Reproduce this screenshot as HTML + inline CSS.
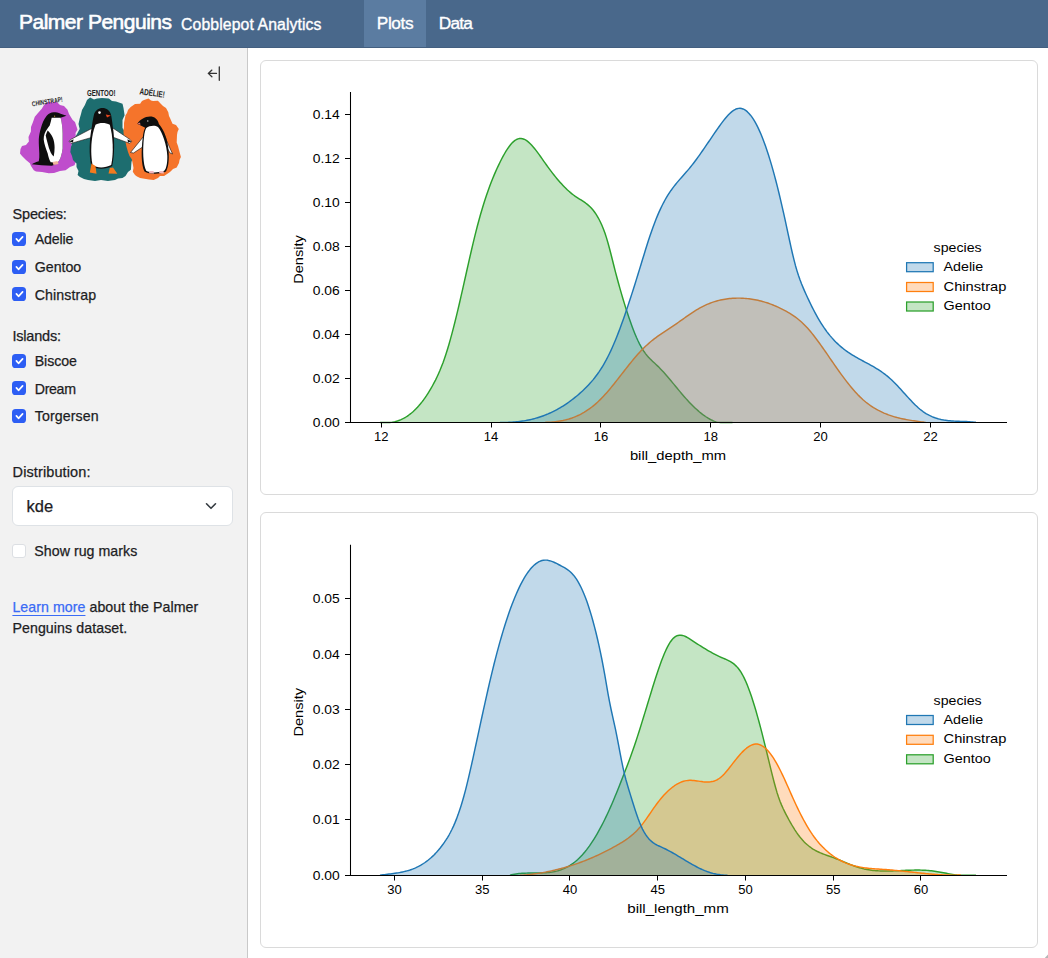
<!DOCTYPE html>
<html><head><meta charset="utf-8"><title>Palmer Penguins</title>
<style>
html,body{margin:0;padding:0;}
body{width:1048px;height:958px;overflow:hidden;position:relative;background:#fff;font-family:"Liberation Sans",sans-serif;}
.t{position:absolute;white-space:nowrap;line-height:1;-webkit-text-stroke:0.25px currentColor;}
.hdr{position:absolute;left:0;top:0;width:1048px;height:48px;background:#49688b;box-shadow:inset 0 -1px 0 rgba(0,0,0,0.08);}
.tab{position:absolute;left:364px;top:0;width:62px;height:47px;background:#5b7ca1;}
.side{position:absolute;left:0;top:48px;width:247px;height:910px;background:#f2f2f2;border-right:1px solid #c9c9c9;}
.cb{position:absolute;width:14px;height:14px;border-radius:3.6px;background:#2d5ef4;}
.cb svg{display:block}
.cbe{position:absolute;width:12px;height:12px;border-radius:3px;background:#fff;border:1px solid #dcdfe3;}
.sel{position:absolute;left:12px;top:486px;width:219px;height:38px;border:1px solid #dee2e6;border-radius:6px;background:#fff;}
.card{position:absolute;left:260px;width:776px;border:1px solid #dadada;border-radius:6px;background:#fff;}
svg text{font-family:"Liberation Sans",sans-serif;fill:#000;}
</style></head><body>
<div class="hdr"></div>
<div class="tab"></div>
<div class="t" style="left:19.00px;top:10.72px;font-size:21px;letter-spacing:-0.494px;color:#fff;font-weight:400;-webkit-text-stroke:0.6px #fff;">Palmer Penguins</div>
<div class="t" style="left:181.00px;top:17.13px;font-size:15.8px;letter-spacing:0.096px;color:#fff;font-weight:400;-webkit-text-stroke:0.35px #fff;">Cobblepot Analytics</div>
<div class="t" style="left:376.80px;top:14.86px;font-size:17.3px;letter-spacing:-0.414px;color:#fff;font-weight:400;-webkit-text-stroke:0.35px #fff;">Plots</div>
<div class="t" style="left:438.75px;top:14.86px;font-size:17.3px;letter-spacing:-0.802px;color:#fff;font-weight:400;-webkit-text-stroke:0.35px #fff;">Data</div>
<div class="side"></div>
<div class="t" style="left:12.50px;top:206.73px;font-size:14.5px;letter-spacing:-0.173px;color:#1d1d1f;font-weight:400;">Species:</div><div class="cb" style="left:12px;top:232px"><svg width="14" height="14" viewBox="0 0 14 14"><path d="M4.4 6.9 L6.5 9.3 L10.6 4.9" fill="none" stroke="#fff" stroke-width="1.7" stroke-linecap="round" stroke-linejoin="round"/></svg></div><div class="t" style="left:34.75px;top:231.73px;font-size:14.2px;letter-spacing:-0.145px;color:#1d1d1f;font-weight:400;">Adelie</div><div class="cb" style="left:12px;top:260px"><svg width="14" height="14" viewBox="0 0 14 14"><path d="M4.4 6.9 L6.5 9.3 L10.6 4.9" fill="none" stroke="#fff" stroke-width="1.7" stroke-linecap="round" stroke-linejoin="round"/></svg></div><div class="t" style="left:34.75px;top:260.08px;font-size:14.2px;letter-spacing:-0.015px;color:#1d1d1f;font-weight:400;">Gentoo</div><div class="cb" style="left:12px;top:287px"><svg width="14" height="14" viewBox="0 0 14 14"><path d="M4.4 6.9 L6.5 9.3 L10.6 4.9" fill="none" stroke="#fff" stroke-width="1.7" stroke-linecap="round" stroke-linejoin="round"/></svg></div><div class="t" style="left:34.75px;top:287.58px;font-size:14.2px;letter-spacing:0.090px;color:#1d1d1f;font-weight:400;">Chinstrap</div><div class="t" style="left:12.50px;top:328.73px;font-size:14.5px;letter-spacing:-0.210px;color:#1d1d1f;font-weight:400;">Islands:</div><div class="cb" style="left:12px;top:354px"><svg width="14" height="14" viewBox="0 0 14 14"><path d="M4.4 6.9 L6.5 9.3 L10.6 4.9" fill="none" stroke="#fff" stroke-width="1.7" stroke-linecap="round" stroke-linejoin="round"/></svg></div><div class="t" style="left:34.75px;top:353.98px;font-size:14.2px;letter-spacing:-0.093px;color:#1d1d1f;font-weight:400;">Biscoe</div><div class="cb" style="left:12px;top:381px"><svg width="14" height="14" viewBox="0 0 14 14"><path d="M4.4 6.9 L6.5 9.3 L10.6 4.9" fill="none" stroke="#fff" stroke-width="1.7" stroke-linecap="round" stroke-linejoin="round"/></svg></div><div class="t" style="left:34.75px;top:381.98px;font-size:14.2px;letter-spacing:-0.341px;color:#1d1d1f;font-weight:400;">Dream</div><div class="cb" style="left:12px;top:409px"><svg width="14" height="14" viewBox="0 0 14 14"><path d="M4.4 6.9 L6.5 9.3 L10.6 4.9" fill="none" stroke="#fff" stroke-width="1.7" stroke-linecap="round" stroke-linejoin="round"/></svg></div><div class="t" style="left:34.75px;top:409.48px;font-size:14.2px;letter-spacing:0.107px;color:#1d1d1f;font-weight:400;">Torgersen</div><div class="t" style="left:12.60px;top:464.93px;font-size:14.5px;letter-spacing:0.107px;color:#1d1d1f;font-weight:400;">Distribution:</div><div class="sel"></div><div class="t" style="left:26.50px;top:497.83px;font-size:16.5px;letter-spacing:0.051px;color:#1d1d1f;font-weight:400;">kde</div><svg style="position:absolute;left:204px;top:499px" width="14" height="14" viewBox="0 0 14 14"><path d="M2.5 4.8 L7 9.3 L11.5 4.8" fill="none" stroke="#343a40" stroke-width="1.6" stroke-linecap="round" stroke-linejoin="round"/></svg><div class="cbe" style="left:12px;top:544px"></div><div class="t" style="left:34.35px;top:543.58px;font-size:14.2px;letter-spacing:0.031px;color:#1d1d1f;font-weight:400;">Show rug marks</div><div class="t" style="left:12.40px;top:599.58px;font-size:14.2px;letter-spacing:0.050px;color:#1d1d1f;font-weight:400;"><span style="color:#3a6bf5;text-decoration:underline;text-underline-offset:3px">Learn more</span> about the Palmer</div><div class="t" style="left:12.40px;top:620.98px;font-size:14.2px;letter-spacing:0.082px;color:#1d1d1f;font-weight:400;">Penguins dataset.</div><svg style="position:absolute;left:200px;top:60px" width="30" height="26" viewBox="200 60 30 26"><path d="M216.5 73.4 H208.3 M211.9 70.1 L208.3 73.4 L211.9 76.8 M219.3 66.8 V80.3" fill="none" stroke="#333" stroke-width="1.3" stroke-linecap="round" stroke-linejoin="round"/></svg>
<svg style="position:absolute;left:14px;top:82px" width="175" height="105" viewBox="14 82 175 105">
<path d="M48.7 101.4 L52 102.5 L56.6 101.8 L60 105 L64 106 L67.5 109.8 L69 114 L72.5 119.7 L75 122 L77.5 129.6 L75.5 133 L76 138.5 L73 141 L71.5 145.5 L74 149 L75.5 155.4 L76.5 160 L74.5 165.3 L70 167 L65.6 170.3 L60 171 L54 173 L48.7 173.2 L42 172 L36 171.5 L33.8 170.3 L31 166 L29.9 163.3 L26 160 L22 156 L20 153.4 L20.5 149 L22 146 L26 145 L28.9 141.5 L28.5 137 L30.9 131.6 L31 127 L33 122 L34.8 116.7 L38 113 L41.8 108.8 L44 105 Z" fill="#bf4dcc"/>
<path d="M90.1 97.6 L94 99.5 L97 98.5 L102 98 L108.9 98.6 L112 101 L116 101.5 L122.5 103.8 L123.5 108 L124.6 115.3 L122.5 120 L122.5 127.9 L125 132 L127 137 L128.8 142.5 L131.5 149 L133 157.1 L131.5 162 L130.9 169.7 L128 172 L125.5 176 L122.5 178 L118 178.5 L115 180 L107.9 181.1 L101 180 L95 181 L88 180.1 L84 179 L80 177 L77.6 174.9 L78.5 171 L76.5 167 L76.5 163.4 L73 160 L72 156 L70.3 151.9 L71 147 L72.4 142.5 L74 139 L77 134 L79.7 128.9 L78.5 124 L79.7 118.5 L81 114 L82 110 L84.9 104.9 L87 100 Z" fill="#1d6d6f"/>
<path d="M148.5 98.6 L151 100.5 L153 101 L157.9 100.7 L161 104 L163 106 L166 108 L168.3 112.2 L169 116 L170 118 L172.5 123.7 L176 125 L178.8 128.9 L177.5 132 L177 135 L176.7 142.5 L178 146 L179 150 L180.9 157.1 L179.5 160 L179 163 L176.7 167.6 L173 169 L170 172 L164.1 175.9 L160 176 L158 178 L153.7 180.1 L149 179.5 L146 179 L140.1 178 L137 176.5 L135 175 L132.8 171.7 L133.5 168 L133 165 L131.8 159.2 L129.5 156 L128 152 L126.5 146.7 L125.5 142 L124 138 L123.4 131 L124 127 L124 123 L125.5 115.3 L127 113 L128 110 L130.7 107 L135 104 L140.1 103.8 L142 101 L144 100 Z" fill="#f5742b"/>
<!-- chinstrap penguin -->
<path d="M53.7 112.3 C56 112.3 58.5 112.8 60.6 113.7 L66.5 115.7 L60.6 117.7 C61.8 122 62.6 128 62.6 133.6 L62.6 148.4 C62.3 151.5 61.6 154.5 60.6 157.4 C59.8 159.5 58.8 161 57.6 162.3 C55.8 164 53.8 165.2 51.7 165.8 C45 165.6 38 165 31.8 164.3 C34 162.8 36.5 161.8 38.8 161.3 C39.3 158.5 39.4 156 39.3 153.4 C39.1 148.5 38.7 144 38.8 139.5 C39 135.5 39.8 132 40.8 128.6 C42 123.5 44 119 46.7 115.7 C48.6 113.6 51 112.4 53.7 112.3 Z" fill="#0e0e0e"/>
<path d="M51.7 117.7 L60.6 117.7 C61.8 122 62.6 128 62.6 133.6 L62.6 148.4 C62.3 151.5 61.6 154.5 60.6 157.4 C59.8 159.5 58.8 161 57.6 162.3 L50.7 162.3 C49.2 159.5 48.3 156.5 47.7 153.4 C46 149 44.2 144 43.7 139.5 C43.6 137.5 44 135.5 44.7 133.6 C46 130.5 48 128 49.7 125.6 C50.6 123 51 120.5 51.7 117.7 Z" fill="#fff"/>
<path d="M47.7 130.6 C49.7 132.5 51.5 134.8 52.7 137.5 C54 140.5 54.6 144 54.6 147.5 C54.6 150.5 54.3 153.5 53.7 156.4 C52.5 155.3 51.5 154 50.7 152.4 C49.3 149.5 48.4 146.5 47.7 143.5 C47 141 46.2 138.3 45.7 135.6 C46.2 133.8 46.9 132.1 47.7 130.6 Z" fill="#0e0e0e"/>
<path d="M52.5 162 L57.5 161 L58.5 164 L53.5 165 Z" fill="#f0b49c"/>
<circle cx="54.6" cy="116.2" r="0.6" fill="#c08a30"/>
<!-- gentoo penguin -->
<path d="M93 127.8 L70.5 139.6 L69.2 141.4 L71 143.4 L92.5 137.2 Z M112.5 127.8 L130.2 139.6 L131.6 141.6 L129.8 143.4 L113 137.2 Z" fill="#fff" stroke="#111" stroke-width="0.6" stroke-linejoin="round"/>
<path d="M69.2 141.4 L73.5 139.2 L73 142.5 Z M131.6 141.6 L127.5 139.2 L128 142.5 Z" fill="#111"/>
<path d="M102.5 108 C106.5 108 109.8 110.5 111 114.5 C111.8 118 112.3 122 112.8 127 C114.6 139 114.8 155 112.2 166 C106 169.5 96 169.5 91.3 166 C88.8 155 89.4 139 91.8 127 C92.4 122 93.2 118 94 114.5 C95.2 110.5 98.5 108 102.5 108 Z" fill="#0f0f0f"/>
<path d="M95.5 124.8 C99.5 122.5 105.5 122.5 109.8 124.8 C113 136 113.8 153 111.2 165 C105 168.2 97 168.2 92.5 165 C90.2 153 90.9 136 95.5 124.8 Z" fill="#fff"/>
<path d="M105.8 114.6 L110.8 115.4 L107 117.6 Z" fill="#e8461c"/>
<circle cx="99.5" cy="112.6" r="1.3" fill="#fff"/>
<path d="M91.5 163.5 L89.8 172.5 L96.5 173.8 L95.5 166 Z M109.8 168 L108.5 173.6 L117.3 173.8 L113 167.5 Z" fill="#f47a1e"/>
<!-- adelie penguin -->
<path d="M143.5 136.5 L130.5 152.5 L133.5 153 L144.2 146 Z M163.8 134.5 L172.6 154 L170 153 L165.5 145 Z" fill="#fff" stroke="#111" stroke-width="0.6" stroke-linejoin="round"/>
<path d="M150 116.4 C154.5 116.4 157.8 119 158.9 124 C162.5 128.5 166.5 135 168 146 C169.5 157 169 166 166 171.5 C160 174.5 149 174.5 144.5 171.5 C141 165 141.2 150 142.7 138 C143.2 133 144.2 129.5 145.2 127.8 L137.2 123.7 C139.5 120 145 116.4 150 116.4 Z" fill="#0f0f0f"/>
<path d="M146.3 128 C149.5 125.5 155 125 158 127 C162.5 132.5 166.8 145 167.3 156 C167.5 163 166.3 168.8 164.3 170.8 C158 173 150 173 146.2 170.8 C143 164.5 142.5 150 144 137 C144.5 132.5 145.3 130 146.3 128 Z" fill="#fff"/>
<circle cx="147.8" cy="121" r="0.7" fill="#fff" opacity="0.8"/>
<path d="M137.2 123.7 L140 122.5 L140.5 124.8 Z" fill="#e07a7a"/>
<path d="M149.5 171 L153.5 171 L154 173.5 L149 173.3 Z M159.5 171 L163.5 171 L164 173.5 L159 173.3 Z" fill="#f0b8c0"/>
<text x="31.5" y="104" font-size="7" transform="rotate(-9 47 100)" style="font-family:'Liberation Sans',sans-serif;font-weight:bold;fill:#222" textLength="31" lengthAdjust="spacingAndGlyphs">CHINSTRAP!</text>
<text x="87" y="95.8" font-size="9.5" style="font-family:'Liberation Sans',sans-serif;font-weight:bold;fill:#222" textLength="28.5" lengthAdjust="spacingAndGlyphs">GENTOO!</text>
<text x="139.6" y="96" font-size="9" transform="rotate(8 152 92)" style="font-family:'Liberation Sans',sans-serif;font-weight:bold;fill:#222" textLength="25.5" lengthAdjust="spacingAndGlyphs">ADÉLIE!</text>
</svg>

<div class="card" style="top:60px;height:433px"></div>
<div class="card" style="top:512px;height:434px"></div>
<svg style="position:absolute;left:0;top:0" width="1048" height="958" viewBox="0 0 1048 958">
<path d="M1048 954.5 L1048 958 L1044.8 958 Z" fill="#b5b5b5"/>
<path d="M380.00,422.40 L381.50,422.40 L383.00,422.40 L384.50,422.40 L386.00,422.40 L387.50,422.40 L389.00,422.40 L390.50,422.40 L392.00,422.28 L393.50,422.01 L395.00,421.67 L396.50,421.26 L398.00,420.78 L399.50,420.23 L401.00,419.60 L402.50,418.90 L404.00,418.12 L405.50,417.26 L407.00,416.32 L408.50,415.29 L410.00,414.18 L411.50,412.98 L413.00,411.69 L414.50,410.30 L416.00,408.82 L417.50,407.25 L419.00,405.57 L420.50,403.80 L422.00,401.92 L423.50,399.94 L425.00,397.85 L426.50,395.66 L428.00,393.35 L429.50,390.93 L431.00,388.39 L432.50,385.74 L434.00,382.97 L435.50,380.06 L437.00,376.98 L438.50,373.72 L440.00,370.27 L441.50,366.58 L443.00,362.66 L444.50,358.46 L446.00,353.98 L447.50,349.22 L449.00,344.20 L450.50,338.92 L452.00,333.41 L453.50,327.69 L455.00,321.76 L456.50,315.66 L458.00,309.39 L459.50,302.97 L461.00,296.44 L462.50,289.83 L464.00,283.16 L465.50,276.47 L467.00,269.78 L468.50,263.12 L470.00,256.53 L471.50,250.03 L473.00,243.65 L474.50,237.42 L476.00,231.37 L477.50,225.54 L479.00,219.94 L480.50,214.57 L482.00,209.43 L483.50,204.50 L485.00,199.78 L486.50,195.26 L488.00,190.93 L489.50,186.79 L491.00,182.82 L492.50,179.02 L494.00,175.38 L495.50,171.88 L497.00,168.54 L498.50,165.32 L500.00,162.23 L501.50,159.26 L503.00,156.43 L504.50,153.75 L506.00,151.23 L507.50,148.89 L509.00,146.74 L510.50,144.81 L512.00,143.10 L513.50,141.64 L515.00,140.43 L516.50,139.50 L518.00,138.85 L519.50,138.51 L521.00,138.47 L522.50,138.71 L524.00,139.22 L525.50,139.97 L527.00,140.94 L528.50,142.11 L530.00,143.48 L531.50,145.00 L533.00,146.67 L534.50,148.47 L536.00,150.37 L537.50,152.36 L539.00,154.42 L540.50,156.52 L542.00,158.66 L543.50,160.80 L545.00,162.92 L546.50,165.02 L548.00,167.09 L549.50,169.12 L551.00,171.12 L552.50,173.07 L554.00,174.98 L555.50,176.85 L557.00,178.67 L558.50,180.44 L560.00,182.16 L561.50,183.83 L563.00,185.44 L564.50,187.00 L566.00,188.49 L567.50,189.93 L569.00,191.30 L570.50,192.60 L572.00,193.83 L573.50,195.00 L575.00,196.09 L576.50,197.11 L578.00,198.08 L579.50,199.02 L581.00,199.95 L582.50,200.90 L584.00,201.90 L585.50,202.96 L587.00,204.10 L588.50,205.36 L590.00,206.75 L591.50,208.30 L593.00,210.04 L594.50,211.97 L596.00,214.14 L597.50,216.55 L599.00,219.24 L600.50,222.23 L602.00,225.55 L603.50,229.24 L605.00,233.34 L606.50,237.89 L608.00,242.95 L609.50,248.46 L611.00,254.29 L612.50,260.26 L614.00,266.23 L615.50,272.06 L617.00,277.74 L618.50,283.27 L620.00,288.65 L621.50,293.89 L623.00,298.97 L624.50,303.90 L626.00,308.68 L627.50,313.32 L629.00,317.79 L630.50,322.11 L632.00,326.25 L633.50,330.19 L635.00,333.94 L636.50,337.48 L638.00,340.79 L639.50,343.85 L641.00,346.67 L642.50,349.23 L644.00,351.53 L645.50,353.59 L647.00,355.47 L648.50,357.18 L650.00,358.76 L651.50,360.24 L653.00,361.66 L654.50,363.05 L656.00,364.44 L657.50,365.87 L659.00,367.35 L660.50,368.89 L662.00,370.48 L663.50,372.11 L665.00,373.79 L666.50,375.50 L668.00,377.24 L669.50,379.01 L671.00,380.80 L672.50,382.60 L674.00,384.41 L675.50,386.23 L677.00,388.04 L678.50,389.85 L680.00,391.64 L681.50,393.42 L683.00,395.18 L684.50,396.91 L686.00,398.61 L687.50,400.27 L689.00,401.89 L690.50,403.47 L692.00,405.00 L693.50,406.49 L695.00,407.93 L696.50,409.32 L698.00,410.66 L699.50,411.95 L701.00,413.18 L702.50,414.35 L704.00,415.46 L705.50,416.51 L707.00,417.49 L708.50,418.41 L710.00,419.25 L711.50,420.03 L713.00,420.74 L714.50,421.37 L716.00,421.92 L717.50,422.39 L719.00,422.40 L720.50,422.40 L722.00,422.40 L723.50,422.40 L725.00,422.40 L726.50,422.40 L728.00,422.40 L729.50,422.40 L731.00,422.40 L732.50,422.40 L732.50,422.40 L380.00,422.40 Z" fill="#2ca02c" fill-opacity="0.28" stroke="none"/><path d="M380.00,422.40 L381.50,422.40 L383.00,422.40 L384.50,422.40 L386.00,422.40 L387.50,422.40 L389.00,422.40 L390.50,422.40 L392.00,422.28 L393.50,422.01 L395.00,421.67 L396.50,421.26 L398.00,420.78 L399.50,420.23 L401.00,419.60 L402.50,418.90 L404.00,418.12 L405.50,417.26 L407.00,416.32 L408.50,415.29 L410.00,414.18 L411.50,412.98 L413.00,411.69 L414.50,410.30 L416.00,408.82 L417.50,407.25 L419.00,405.57 L420.50,403.80 L422.00,401.92 L423.50,399.94 L425.00,397.85 L426.50,395.66 L428.00,393.35 L429.50,390.93 L431.00,388.39 L432.50,385.74 L434.00,382.97 L435.50,380.06 L437.00,376.98 L438.50,373.72 L440.00,370.27 L441.50,366.58 L443.00,362.66 L444.50,358.46 L446.00,353.98 L447.50,349.22 L449.00,344.20 L450.50,338.92 L452.00,333.41 L453.50,327.69 L455.00,321.76 L456.50,315.66 L458.00,309.39 L459.50,302.97 L461.00,296.44 L462.50,289.83 L464.00,283.16 L465.50,276.47 L467.00,269.78 L468.50,263.12 L470.00,256.53 L471.50,250.03 L473.00,243.65 L474.50,237.42 L476.00,231.37 L477.50,225.54 L479.00,219.94 L480.50,214.57 L482.00,209.43 L483.50,204.50 L485.00,199.78 L486.50,195.26 L488.00,190.93 L489.50,186.79 L491.00,182.82 L492.50,179.02 L494.00,175.38 L495.50,171.88 L497.00,168.54 L498.50,165.32 L500.00,162.23 L501.50,159.26 L503.00,156.43 L504.50,153.75 L506.00,151.23 L507.50,148.89 L509.00,146.74 L510.50,144.81 L512.00,143.10 L513.50,141.64 L515.00,140.43 L516.50,139.50 L518.00,138.85 L519.50,138.51 L521.00,138.47 L522.50,138.71 L524.00,139.22 L525.50,139.97 L527.00,140.94 L528.50,142.11 L530.00,143.48 L531.50,145.00 L533.00,146.67 L534.50,148.47 L536.00,150.37 L537.50,152.36 L539.00,154.42 L540.50,156.52 L542.00,158.66 L543.50,160.80 L545.00,162.92 L546.50,165.02 L548.00,167.09 L549.50,169.12 L551.00,171.12 L552.50,173.07 L554.00,174.98 L555.50,176.85 L557.00,178.67 L558.50,180.44 L560.00,182.16 L561.50,183.83 L563.00,185.44 L564.50,187.00 L566.00,188.49 L567.50,189.93 L569.00,191.30 L570.50,192.60 L572.00,193.83 L573.50,195.00 L575.00,196.09 L576.50,197.11 L578.00,198.08 L579.50,199.02 L581.00,199.95 L582.50,200.90 L584.00,201.90 L585.50,202.96 L587.00,204.10 L588.50,205.36 L590.00,206.75 L591.50,208.30 L593.00,210.04 L594.50,211.97 L596.00,214.14 L597.50,216.55 L599.00,219.24 L600.50,222.23 L602.00,225.55 L603.50,229.24 L605.00,233.34 L606.50,237.89 L608.00,242.95 L609.50,248.46 L611.00,254.29 L612.50,260.26 L614.00,266.23 L615.50,272.06 L617.00,277.74 L618.50,283.27 L620.00,288.65 L621.50,293.89 L623.00,298.97 L624.50,303.90 L626.00,308.68 L627.50,313.32 L629.00,317.79 L630.50,322.11 L632.00,326.25 L633.50,330.19 L635.00,333.94 L636.50,337.48 L638.00,340.79 L639.50,343.85 L641.00,346.67 L642.50,349.23 L644.00,351.53 L645.50,353.59 L647.00,355.47 L648.50,357.18 L650.00,358.76 L651.50,360.24 L653.00,361.66 L654.50,363.05 L656.00,364.44 L657.50,365.87 L659.00,367.35 L660.50,368.89 L662.00,370.48 L663.50,372.11 L665.00,373.79 L666.50,375.50 L668.00,377.24 L669.50,379.01 L671.00,380.80 L672.50,382.60 L674.00,384.41 L675.50,386.23 L677.00,388.04 L678.50,389.85 L680.00,391.64 L681.50,393.42 L683.00,395.18 L684.50,396.91 L686.00,398.61 L687.50,400.27 L689.00,401.89 L690.50,403.47 L692.00,405.00 L693.50,406.49 L695.00,407.93 L696.50,409.32 L698.00,410.66 L699.50,411.95 L701.00,413.18 L702.50,414.35 L704.00,415.46 L705.50,416.51 L707.00,417.49 L708.50,418.41 L710.00,419.25 L711.50,420.03 L713.00,420.74 L714.50,421.37 L716.00,421.92 L717.50,422.39 L719.00,422.40 L720.50,422.40 L722.00,422.40 L723.50,422.40 L725.00,422.40 L726.50,422.40 L728.00,422.40 L729.50,422.40 L731.00,422.40 L732.50,422.40" fill="none" stroke="#2ca02c" stroke-width="1.45" stroke-linejoin="round"/>
<path d="M545.00,422.40 L546.50,422.32 L548.00,422.27 L549.50,422.20 L551.00,422.12 L552.50,422.00 L554.00,421.87 L555.50,421.71 L557.00,421.52 L558.50,421.31 L560.00,421.07 L561.50,420.80 L563.00,420.50 L564.50,420.16 L566.00,419.80 L567.50,419.39 L569.00,418.96 L570.50,418.48 L572.00,417.97 L573.50,417.42 L575.00,416.82 L576.50,416.19 L578.00,415.51 L579.50,414.79 L581.00,414.02 L582.50,413.21 L584.00,412.35 L585.50,411.44 L587.00,410.47 L588.50,409.46 L590.00,408.40 L591.50,407.28 L593.00,406.10 L594.50,404.87 L596.00,403.58 L597.50,402.24 L599.00,400.83 L600.50,399.36 L602.00,397.83 L603.50,396.25 L605.00,394.61 L606.50,392.92 L608.00,391.20 L609.50,389.43 L611.00,387.63 L612.50,385.79 L614.00,383.93 L615.50,382.05 L617.00,380.15 L618.50,378.24 L620.00,376.32 L621.50,374.39 L623.00,372.46 L624.50,370.53 L626.00,368.62 L627.50,366.71 L629.00,364.82 L630.50,362.95 L632.00,361.11 L633.50,359.30 L635.00,357.52 L636.50,355.77 L638.00,354.07 L639.50,352.42 L641.00,350.81 L642.50,349.26 L644.00,347.77 L645.50,346.33 L647.00,344.94 L648.50,343.60 L650.00,342.31 L651.50,341.06 L653.00,339.85 L654.50,338.68 L656.00,337.55 L657.50,336.45 L659.00,335.38 L660.50,334.33 L662.00,333.30 L663.50,332.29 L665.00,331.30 L666.50,330.31 L668.00,329.32 L669.50,328.34 L671.00,327.35 L672.50,326.36 L674.00,325.36 L675.50,324.34 L677.00,323.30 L678.50,322.25 L680.00,321.20 L681.50,320.13 L683.00,319.06 L684.50,318.00 L686.00,316.94 L687.50,315.88 L689.00,314.84 L690.50,313.82 L692.00,312.81 L693.50,311.82 L695.00,310.86 L696.50,309.93 L698.00,309.03 L699.50,308.16 L701.00,307.34 L702.50,306.55 L704.00,305.81 L705.50,305.10 L707.00,304.43 L708.50,303.80 L710.00,303.21 L711.50,302.65 L713.00,302.13 L714.50,301.64 L716.00,301.19 L717.50,300.77 L719.00,300.39 L720.50,300.04 L722.00,299.72 L723.50,299.43 L725.00,299.17 L726.50,298.94 L728.00,298.74 L729.50,298.58 L731.00,298.43 L732.50,298.32 L734.00,298.23 L735.50,298.17 L737.00,298.14 L738.50,298.13 L740.00,298.15 L741.50,298.19 L743.00,298.25 L744.50,298.35 L746.00,298.46 L747.50,298.60 L749.00,298.77 L750.50,298.97 L752.00,299.18 L753.50,299.43 L755.00,299.70 L756.50,299.99 L758.00,300.32 L759.50,300.67 L761.00,301.04 L762.50,301.44 L764.00,301.87 L765.50,302.32 L767.00,302.80 L768.50,303.31 L770.00,303.84 L771.50,304.40 L773.00,304.98 L774.50,305.60 L776.00,306.24 L777.50,306.90 L779.00,307.60 L780.50,308.32 L782.00,309.07 L783.50,309.84 L785.00,310.65 L786.50,311.48 L788.00,312.33 L789.50,313.22 L791.00,314.14 L792.50,315.11 L794.00,316.12 L795.50,317.18 L797.00,318.29 L798.50,319.47 L800.00,320.72 L801.50,322.04 L803.00,323.43 L804.50,324.91 L806.00,326.47 L807.50,328.10 L809.00,329.81 L810.50,331.57 L812.00,333.40 L813.50,335.28 L815.00,337.22 L816.50,339.20 L818.00,341.22 L819.50,343.28 L821.00,345.37 L822.50,347.48 L824.00,349.62 L825.50,351.78 L827.00,353.95 L828.50,356.12 L830.00,358.31 L831.50,360.49 L833.00,362.66 L834.50,364.82 L836.00,366.97 L837.50,369.10 L839.00,371.21 L840.50,373.30 L842.00,375.36 L843.50,377.39 L845.00,379.38 L846.50,381.34 L848.00,383.27 L849.50,385.15 L851.00,386.98 L852.50,388.77 L854.00,390.50 L855.50,392.19 L857.00,393.81 L858.50,395.38 L860.00,396.88 L861.50,398.31 L863.00,399.68 L864.50,400.99 L866.00,402.23 L867.50,403.41 L869.00,404.53 L870.50,405.60 L872.00,406.61 L873.50,407.58 L875.00,408.49 L876.50,409.35 L878.00,410.18 L879.50,410.96 L881.00,411.70 L882.50,412.40 L884.00,413.07 L885.50,413.70 L887.00,414.29 L888.50,414.86 L890.00,415.39 L891.50,415.90 L893.00,416.38 L894.50,416.83 L896.00,417.25 L897.50,417.65 L899.00,418.03 L900.50,418.38 L902.00,418.72 L903.50,419.03 L905.00,419.33 L906.50,419.62 L908.00,419.88 L909.50,420.14 L911.00,420.38 L912.50,420.61 L914.00,420.83 L915.50,421.05 L917.00,421.26 L918.50,421.46 L920.00,421.66 L921.50,421.85 L923.00,422.04 L924.50,422.24 L926.00,422.40 L926.00,422.40 L545.00,422.40 Z" fill="#ff7f0e" fill-opacity="0.28" stroke="none"/><path d="M545.00,422.40 L546.50,422.32 L548.00,422.27 L549.50,422.20 L551.00,422.12 L552.50,422.00 L554.00,421.87 L555.50,421.71 L557.00,421.52 L558.50,421.31 L560.00,421.07 L561.50,420.80 L563.00,420.50 L564.50,420.16 L566.00,419.80 L567.50,419.39 L569.00,418.96 L570.50,418.48 L572.00,417.97 L573.50,417.42 L575.00,416.82 L576.50,416.19 L578.00,415.51 L579.50,414.79 L581.00,414.02 L582.50,413.21 L584.00,412.35 L585.50,411.44 L587.00,410.47 L588.50,409.46 L590.00,408.40 L591.50,407.28 L593.00,406.10 L594.50,404.87 L596.00,403.58 L597.50,402.24 L599.00,400.83 L600.50,399.36 L602.00,397.83 L603.50,396.25 L605.00,394.61 L606.50,392.92 L608.00,391.20 L609.50,389.43 L611.00,387.63 L612.50,385.79 L614.00,383.93 L615.50,382.05 L617.00,380.15 L618.50,378.24 L620.00,376.32 L621.50,374.39 L623.00,372.46 L624.50,370.53 L626.00,368.62 L627.50,366.71 L629.00,364.82 L630.50,362.95 L632.00,361.11 L633.50,359.30 L635.00,357.52 L636.50,355.77 L638.00,354.07 L639.50,352.42 L641.00,350.81 L642.50,349.26 L644.00,347.77 L645.50,346.33 L647.00,344.94 L648.50,343.60 L650.00,342.31 L651.50,341.06 L653.00,339.85 L654.50,338.68 L656.00,337.55 L657.50,336.45 L659.00,335.38 L660.50,334.33 L662.00,333.30 L663.50,332.29 L665.00,331.30 L666.50,330.31 L668.00,329.32 L669.50,328.34 L671.00,327.35 L672.50,326.36 L674.00,325.36 L675.50,324.34 L677.00,323.30 L678.50,322.25 L680.00,321.20 L681.50,320.13 L683.00,319.06 L684.50,318.00 L686.00,316.94 L687.50,315.88 L689.00,314.84 L690.50,313.82 L692.00,312.81 L693.50,311.82 L695.00,310.86 L696.50,309.93 L698.00,309.03 L699.50,308.16 L701.00,307.34 L702.50,306.55 L704.00,305.81 L705.50,305.10 L707.00,304.43 L708.50,303.80 L710.00,303.21 L711.50,302.65 L713.00,302.13 L714.50,301.64 L716.00,301.19 L717.50,300.77 L719.00,300.39 L720.50,300.04 L722.00,299.72 L723.50,299.43 L725.00,299.17 L726.50,298.94 L728.00,298.74 L729.50,298.58 L731.00,298.43 L732.50,298.32 L734.00,298.23 L735.50,298.17 L737.00,298.14 L738.50,298.13 L740.00,298.15 L741.50,298.19 L743.00,298.25 L744.50,298.35 L746.00,298.46 L747.50,298.60 L749.00,298.77 L750.50,298.97 L752.00,299.18 L753.50,299.43 L755.00,299.70 L756.50,299.99 L758.00,300.32 L759.50,300.67 L761.00,301.04 L762.50,301.44 L764.00,301.87 L765.50,302.32 L767.00,302.80 L768.50,303.31 L770.00,303.84 L771.50,304.40 L773.00,304.98 L774.50,305.60 L776.00,306.24 L777.50,306.90 L779.00,307.60 L780.50,308.32 L782.00,309.07 L783.50,309.84 L785.00,310.65 L786.50,311.48 L788.00,312.33 L789.50,313.22 L791.00,314.14 L792.50,315.11 L794.00,316.12 L795.50,317.18 L797.00,318.29 L798.50,319.47 L800.00,320.72 L801.50,322.04 L803.00,323.43 L804.50,324.91 L806.00,326.47 L807.50,328.10 L809.00,329.81 L810.50,331.57 L812.00,333.40 L813.50,335.28 L815.00,337.22 L816.50,339.20 L818.00,341.22 L819.50,343.28 L821.00,345.37 L822.50,347.48 L824.00,349.62 L825.50,351.78 L827.00,353.95 L828.50,356.12 L830.00,358.31 L831.50,360.49 L833.00,362.66 L834.50,364.82 L836.00,366.97 L837.50,369.10 L839.00,371.21 L840.50,373.30 L842.00,375.36 L843.50,377.39 L845.00,379.38 L846.50,381.34 L848.00,383.27 L849.50,385.15 L851.00,386.98 L852.50,388.77 L854.00,390.50 L855.50,392.19 L857.00,393.81 L858.50,395.38 L860.00,396.88 L861.50,398.31 L863.00,399.68 L864.50,400.99 L866.00,402.23 L867.50,403.41 L869.00,404.53 L870.50,405.60 L872.00,406.61 L873.50,407.58 L875.00,408.49 L876.50,409.35 L878.00,410.18 L879.50,410.96 L881.00,411.70 L882.50,412.40 L884.00,413.07 L885.50,413.70 L887.00,414.29 L888.50,414.86 L890.00,415.39 L891.50,415.90 L893.00,416.38 L894.50,416.83 L896.00,417.25 L897.50,417.65 L899.00,418.03 L900.50,418.38 L902.00,418.72 L903.50,419.03 L905.00,419.33 L906.50,419.62 L908.00,419.88 L909.50,420.14 L911.00,420.38 L912.50,420.61 L914.00,420.83 L915.50,421.05 L917.00,421.26 L918.50,421.46 L920.00,421.66 L921.50,421.85 L923.00,422.04 L924.50,422.24 L926.00,422.40" fill="none" stroke="#ff7f0e" stroke-width="1.45" stroke-linejoin="round"/>
<path d="M500.00,422.40 L501.50,422.38 L503.00,422.39 L504.50,422.40 L506.00,422.38 L507.50,422.36 L509.00,422.31 L510.50,422.25 L512.00,422.17 L513.50,422.07 L515.00,421.95 L516.50,421.82 L518.00,421.67 L519.50,421.49 L521.00,421.30 L522.50,421.08 L524.00,420.85 L525.50,420.59 L527.00,420.31 L528.50,420.01 L530.00,419.69 L531.50,419.35 L533.00,418.98 L534.50,418.58 L536.00,418.17 L537.50,417.73 L539.00,417.26 L540.50,416.77 L542.00,416.25 L543.50,415.70 L545.00,415.13 L546.50,414.53 L548.00,413.91 L549.50,413.25 L551.00,412.57 L552.50,411.86 L554.00,411.12 L555.50,410.35 L557.00,409.55 L558.50,408.72 L560.00,407.85 L561.50,406.96 L563.00,406.04 L564.50,405.08 L566.00,404.09 L567.50,403.06 L569.00,402.01 L570.50,400.92 L572.00,399.79 L573.50,398.63 L575.00,397.44 L576.50,396.21 L578.00,394.94 L579.50,393.64 L581.00,392.30 L582.50,390.92 L584.00,389.50 L585.50,388.04 L587.00,386.53 L588.50,384.96 L590.00,383.33 L591.50,381.63 L593.00,379.86 L594.50,378.00 L596.00,376.05 L597.50,374.01 L599.00,371.87 L600.50,369.62 L602.00,367.26 L603.50,364.77 L605.00,362.16 L606.50,359.42 L608.00,356.53 L609.50,353.50 L611.00,350.32 L612.50,347.00 L614.00,343.53 L615.50,339.94 L617.00,336.21 L618.50,332.37 L620.00,328.41 L621.50,324.34 L623.00,320.17 L624.50,315.91 L626.00,311.55 L627.50,307.12 L629.00,302.60 L630.50,298.02 L632.00,293.37 L633.50,288.67 L635.00,283.91 L636.50,279.11 L638.00,274.27 L639.50,269.40 L641.00,264.50 L642.50,259.58 L644.00,254.67 L645.50,249.80 L647.00,245.01 L648.50,240.33 L650.00,235.78 L651.50,231.40 L653.00,227.20 L654.50,223.17 L656.00,219.32 L657.50,215.64 L659.00,212.15 L660.50,208.84 L662.00,205.72 L663.50,202.78 L665.00,200.01 L666.50,197.41 L668.00,194.96 L669.50,192.65 L671.00,190.46 L672.50,188.38 L674.00,186.39 L675.50,184.49 L677.00,182.65 L678.50,180.88 L680.00,179.14 L681.50,177.43 L683.00,175.74 L684.50,174.05 L686.00,172.35 L687.50,170.62 L689.00,168.86 L690.50,167.04 L692.00,165.16 L693.50,163.23 L695.00,161.25 L696.50,159.23 L698.00,157.16 L699.50,155.06 L701.00,152.93 L702.50,150.78 L704.00,148.60 L705.50,146.41 L707.00,144.21 L708.50,142.00 L710.00,139.79 L711.50,137.58 L713.00,135.38 L714.50,133.20 L716.00,131.03 L717.50,128.89 L719.00,126.77 L720.50,124.69 L722.00,122.65 L723.50,120.67 L725.00,118.77 L726.50,116.97 L728.00,115.29 L729.50,113.74 L731.00,112.35 L732.50,111.13 L734.00,110.10 L735.50,109.29 L737.00,108.70 L738.50,108.37 L740.00,108.29 L741.50,108.49 L743.00,108.95 L744.50,109.68 L746.00,110.67 L747.50,111.91 L749.00,113.41 L750.50,115.17 L752.00,117.17 L753.50,119.43 L755.00,121.93 L756.50,124.67 L758.00,127.65 L759.50,130.87 L761.00,134.33 L762.50,138.02 L764.00,141.94 L765.50,146.09 L767.00,150.46 L768.50,155.06 L770.00,159.88 L771.50,164.91 L773.00,170.16 L774.50,175.63 L776.00,181.30 L777.50,187.18 L779.00,193.27 L780.50,199.56 L782.00,206.04 L783.50,212.68 L785.00,219.46 L786.50,226.34 L788.00,233.29 L789.50,240.26 L791.00,247.11 L792.50,253.72 L794.00,259.95 L795.50,265.68 L797.00,270.85 L798.50,275.54 L800.00,279.81 L801.50,283.73 L803.00,287.39 L804.50,290.86 L806.00,294.21 L807.50,297.48 L809.00,300.68 L810.50,303.79 L812.00,306.83 L813.50,309.78 L815.00,312.64 L816.50,315.40 L818.00,318.06 L819.50,320.62 L821.00,323.07 L822.50,325.41 L824.00,327.65 L825.50,329.78 L827.00,331.82 L828.50,333.76 L830.00,335.61 L831.50,337.37 L833.00,339.05 L834.50,340.65 L836.00,342.18 L837.50,343.63 L839.00,345.02 L840.50,346.34 L842.00,347.60 L843.50,348.81 L845.00,349.96 L846.50,351.06 L848.00,352.12 L849.50,353.13 L851.00,354.11 L852.50,355.05 L854.00,355.96 L855.50,356.85 L857.00,357.71 L858.50,358.55 L860.00,359.38 L861.50,360.19 L863.00,361.00 L864.50,361.80 L866.00,362.61 L867.50,363.41 L869.00,364.22 L870.50,365.05 L872.00,365.89 L873.50,366.74 L875.00,367.62 L876.50,368.53 L878.00,369.46 L879.50,370.43 L881.00,371.43 L882.50,372.48 L884.00,373.57 L885.50,374.70 L887.00,375.89 L888.50,377.14 L890.00,378.45 L891.50,379.81 L893.00,381.25 L894.50,382.73 L896.00,384.27 L897.50,385.85 L899.00,387.45 L900.50,389.09 L902.00,390.74 L903.50,392.41 L905.00,394.07 L906.50,395.73 L908.00,397.38 L909.50,399.01 L911.00,400.61 L912.50,402.18 L914.00,403.70 L915.50,405.18 L917.00,406.59 L918.50,407.94 L920.00,409.22 L921.50,410.42 L923.00,411.53 L924.50,412.56 L926.00,413.52 L927.50,414.40 L929.00,415.21 L930.50,415.95 L932.00,416.62 L933.50,417.24 L935.00,417.79 L936.50,418.29 L938.00,418.74 L939.50,419.13 L941.00,419.49 L942.50,419.80 L944.00,420.07 L945.50,420.30 L947.00,420.50 L948.50,420.67 L950.00,420.82 L951.50,420.94 L953.00,421.04 L954.50,421.12 L956.00,421.19 L957.50,421.25 L959.00,421.31 L960.50,421.36 L962.00,421.40 L963.50,421.45 L965.00,421.51 L966.50,421.58 L968.00,421.65 L969.50,421.75 L971.00,421.86 L972.50,421.99 L974.00,422.15 L975.50,422.33 L976.00,422.40 L976.00,422.40 L500.00,422.40 Z" fill="#1f77b4" fill-opacity="0.28" stroke="none"/><path d="M500.00,422.40 L501.50,422.38 L503.00,422.39 L504.50,422.40 L506.00,422.38 L507.50,422.36 L509.00,422.31 L510.50,422.25 L512.00,422.17 L513.50,422.07 L515.00,421.95 L516.50,421.82 L518.00,421.67 L519.50,421.49 L521.00,421.30 L522.50,421.08 L524.00,420.85 L525.50,420.59 L527.00,420.31 L528.50,420.01 L530.00,419.69 L531.50,419.35 L533.00,418.98 L534.50,418.58 L536.00,418.17 L537.50,417.73 L539.00,417.26 L540.50,416.77 L542.00,416.25 L543.50,415.70 L545.00,415.13 L546.50,414.53 L548.00,413.91 L549.50,413.25 L551.00,412.57 L552.50,411.86 L554.00,411.12 L555.50,410.35 L557.00,409.55 L558.50,408.72 L560.00,407.85 L561.50,406.96 L563.00,406.04 L564.50,405.08 L566.00,404.09 L567.50,403.06 L569.00,402.01 L570.50,400.92 L572.00,399.79 L573.50,398.63 L575.00,397.44 L576.50,396.21 L578.00,394.94 L579.50,393.64 L581.00,392.30 L582.50,390.92 L584.00,389.50 L585.50,388.04 L587.00,386.53 L588.50,384.96 L590.00,383.33 L591.50,381.63 L593.00,379.86 L594.50,378.00 L596.00,376.05 L597.50,374.01 L599.00,371.87 L600.50,369.62 L602.00,367.26 L603.50,364.77 L605.00,362.16 L606.50,359.42 L608.00,356.53 L609.50,353.50 L611.00,350.32 L612.50,347.00 L614.00,343.53 L615.50,339.94 L617.00,336.21 L618.50,332.37 L620.00,328.41 L621.50,324.34 L623.00,320.17 L624.50,315.91 L626.00,311.55 L627.50,307.12 L629.00,302.60 L630.50,298.02 L632.00,293.37 L633.50,288.67 L635.00,283.91 L636.50,279.11 L638.00,274.27 L639.50,269.40 L641.00,264.50 L642.50,259.58 L644.00,254.67 L645.50,249.80 L647.00,245.01 L648.50,240.33 L650.00,235.78 L651.50,231.40 L653.00,227.20 L654.50,223.17 L656.00,219.32 L657.50,215.64 L659.00,212.15 L660.50,208.84 L662.00,205.72 L663.50,202.78 L665.00,200.01 L666.50,197.41 L668.00,194.96 L669.50,192.65 L671.00,190.46 L672.50,188.38 L674.00,186.39 L675.50,184.49 L677.00,182.65 L678.50,180.88 L680.00,179.14 L681.50,177.43 L683.00,175.74 L684.50,174.05 L686.00,172.35 L687.50,170.62 L689.00,168.86 L690.50,167.04 L692.00,165.16 L693.50,163.23 L695.00,161.25 L696.50,159.23 L698.00,157.16 L699.50,155.06 L701.00,152.93 L702.50,150.78 L704.00,148.60 L705.50,146.41 L707.00,144.21 L708.50,142.00 L710.00,139.79 L711.50,137.58 L713.00,135.38 L714.50,133.20 L716.00,131.03 L717.50,128.89 L719.00,126.77 L720.50,124.69 L722.00,122.65 L723.50,120.67 L725.00,118.77 L726.50,116.97 L728.00,115.29 L729.50,113.74 L731.00,112.35 L732.50,111.13 L734.00,110.10 L735.50,109.29 L737.00,108.70 L738.50,108.37 L740.00,108.29 L741.50,108.49 L743.00,108.95 L744.50,109.68 L746.00,110.67 L747.50,111.91 L749.00,113.41 L750.50,115.17 L752.00,117.17 L753.50,119.43 L755.00,121.93 L756.50,124.67 L758.00,127.65 L759.50,130.87 L761.00,134.33 L762.50,138.02 L764.00,141.94 L765.50,146.09 L767.00,150.46 L768.50,155.06 L770.00,159.88 L771.50,164.91 L773.00,170.16 L774.50,175.63 L776.00,181.30 L777.50,187.18 L779.00,193.27 L780.50,199.56 L782.00,206.04 L783.50,212.68 L785.00,219.46 L786.50,226.34 L788.00,233.29 L789.50,240.26 L791.00,247.11 L792.50,253.72 L794.00,259.95 L795.50,265.68 L797.00,270.85 L798.50,275.54 L800.00,279.81 L801.50,283.73 L803.00,287.39 L804.50,290.86 L806.00,294.21 L807.50,297.48 L809.00,300.68 L810.50,303.79 L812.00,306.83 L813.50,309.78 L815.00,312.64 L816.50,315.40 L818.00,318.06 L819.50,320.62 L821.00,323.07 L822.50,325.41 L824.00,327.65 L825.50,329.78 L827.00,331.82 L828.50,333.76 L830.00,335.61 L831.50,337.37 L833.00,339.05 L834.50,340.65 L836.00,342.18 L837.50,343.63 L839.00,345.02 L840.50,346.34 L842.00,347.60 L843.50,348.81 L845.00,349.96 L846.50,351.06 L848.00,352.12 L849.50,353.13 L851.00,354.11 L852.50,355.05 L854.00,355.96 L855.50,356.85 L857.00,357.71 L858.50,358.55 L860.00,359.38 L861.50,360.19 L863.00,361.00 L864.50,361.80 L866.00,362.61 L867.50,363.41 L869.00,364.22 L870.50,365.05 L872.00,365.89 L873.50,366.74 L875.00,367.62 L876.50,368.53 L878.00,369.46 L879.50,370.43 L881.00,371.43 L882.50,372.48 L884.00,373.57 L885.50,374.70 L887.00,375.89 L888.50,377.14 L890.00,378.45 L891.50,379.81 L893.00,381.25 L894.50,382.73 L896.00,384.27 L897.50,385.85 L899.00,387.45 L900.50,389.09 L902.00,390.74 L903.50,392.41 L905.00,394.07 L906.50,395.73 L908.00,397.38 L909.50,399.01 L911.00,400.61 L912.50,402.18 L914.00,403.70 L915.50,405.18 L917.00,406.59 L918.50,407.94 L920.00,409.22 L921.50,410.42 L923.00,411.53 L924.50,412.56 L926.00,413.52 L927.50,414.40 L929.00,415.21 L930.50,415.95 L932.00,416.62 L933.50,417.24 L935.00,417.79 L936.50,418.29 L938.00,418.74 L939.50,419.13 L941.00,419.49 L942.50,419.80 L944.00,420.07 L945.50,420.30 L947.00,420.50 L948.50,420.67 L950.00,420.82 L951.50,420.94 L953.00,421.04 L954.50,421.12 L956.00,421.19 L957.50,421.25 L959.00,421.31 L960.50,421.36 L962.00,421.40 L963.50,421.45 L965.00,421.51 L966.50,421.58 L968.00,421.65 L969.50,421.75 L971.00,421.86 L972.50,421.99 L974.00,422.15 L975.50,422.33 L976.00,422.40" fill="none" stroke="#1f77b4" stroke-width="1.45" stroke-linejoin="round"/>
<line x1="350.5" y1="91.9" x2="350.5" y2="422.5" stroke="#000" stroke-width="1.05"/>
<line x1="350" y1="422.5" x2="1007" y2="422.5" stroke="#000" stroke-width="1.05"/>
<line x1="345" y1="422.5" x2="350.5" y2="422.5" stroke="#000" stroke-width="1.05"/>
<text x="339.8" y="426.80" text-anchor="end" font-size="12.2" textLength="27" lengthAdjust="spacingAndGlyphs">0.00</text>
<line x1="345" y1="378.5" x2="350.5" y2="378.5" stroke="#000" stroke-width="1.05"/>
<text x="339.8" y="382.77" text-anchor="end" font-size="12.2" textLength="27" lengthAdjust="spacingAndGlyphs">0.02</text>
<line x1="345" y1="334.5" x2="350.5" y2="334.5" stroke="#000" stroke-width="1.05"/>
<text x="339.8" y="338.74" text-anchor="end" font-size="12.2" textLength="27" lengthAdjust="spacingAndGlyphs">0.04</text>
<line x1="345" y1="290.5" x2="350.5" y2="290.5" stroke="#000" stroke-width="1.05"/>
<text x="339.8" y="294.72" text-anchor="end" font-size="12.2" textLength="27" lengthAdjust="spacingAndGlyphs">0.06</text>
<line x1="345" y1="246.5" x2="350.5" y2="246.5" stroke="#000" stroke-width="1.05"/>
<text x="339.8" y="250.69" text-anchor="end" font-size="12.2" textLength="27" lengthAdjust="spacingAndGlyphs">0.08</text>
<line x1="345" y1="202.5" x2="350.5" y2="202.5" stroke="#000" stroke-width="1.05"/>
<text x="339.8" y="206.66" text-anchor="end" font-size="12.2" textLength="27" lengthAdjust="spacingAndGlyphs">0.10</text>
<line x1="345" y1="158.5" x2="350.5" y2="158.5" stroke="#000" stroke-width="1.05"/>
<text x="339.8" y="162.63" text-anchor="end" font-size="12.2" textLength="27" lengthAdjust="spacingAndGlyphs">0.12</text>
<line x1="345" y1="114.5" x2="350.5" y2="114.5" stroke="#000" stroke-width="1.05"/>
<text x="339.8" y="118.60" text-anchor="end" font-size="12.2" textLength="27" lengthAdjust="spacingAndGlyphs">0.14</text>
<line x1="381.5" y1="422.5" x2="381.5" y2="427.5" stroke="#000" stroke-width="1.05"/>
<text x="381.30" y="441.00" text-anchor="middle" font-size="12.2" textLength="14.5" lengthAdjust="spacingAndGlyphs">12</text>
<line x1="491.5" y1="422.5" x2="491.5" y2="427.5" stroke="#000" stroke-width="1.05"/>
<text x="491.12" y="441.00" text-anchor="middle" font-size="12.2" textLength="14.5" lengthAdjust="spacingAndGlyphs">14</text>
<line x1="600.5" y1="422.5" x2="600.5" y2="427.5" stroke="#000" stroke-width="1.05"/>
<text x="600.94" y="441.00" text-anchor="middle" font-size="12.2" textLength="14.5" lengthAdjust="spacingAndGlyphs">16</text>
<line x1="710.5" y1="422.5" x2="710.5" y2="427.5" stroke="#000" stroke-width="1.05"/>
<text x="710.76" y="441.00" text-anchor="middle" font-size="12.2" textLength="14.5" lengthAdjust="spacingAndGlyphs">18</text>
<line x1="820.5" y1="422.5" x2="820.5" y2="427.5" stroke="#000" stroke-width="1.05"/>
<text x="820.58" y="441.00" text-anchor="middle" font-size="12.2" textLength="14.5" lengthAdjust="spacingAndGlyphs">20</text>
<line x1="930.5" y1="422.5" x2="930.5" y2="427.5" stroke="#000" stroke-width="1.05"/>
<text x="930.40" y="441.00" text-anchor="middle" font-size="12.2" textLength="14.5" lengthAdjust="spacingAndGlyphs">22</text>
<text transform="translate(302.9,259.5) rotate(-90)" text-anchor="middle" font-size="12.2" textLength="48.6" lengthAdjust="spacingAndGlyphs">Density</text>
<text x="678" y="460.00" text-anchor="middle" font-size="12.2" textLength="96.2" lengthAdjust="spacingAndGlyphs">bill_depth_mm</text>
<text x="957.6" y="252.00" text-anchor="middle" font-size="12.2" textLength="48" lengthAdjust="spacingAndGlyphs">species</text>
<rect x="906.6" y="262.70" width="26.6" height="9" fill="#1f77b4" fill-opacity="0.28" stroke="#1f77b4" stroke-width="1.25"/>
<text x="943.6" y="271.10" font-size="12.2" textLength="39.6" lengthAdjust="spacingAndGlyphs">Adelie</text>
<rect x="906.6" y="282.50" width="26.6" height="9" fill="#ff7f0e" fill-opacity="0.28" stroke="#ff7f0e" stroke-width="1.25"/>
<text x="943.6" y="290.50" font-size="12.2" textLength="62.8" lengthAdjust="spacingAndGlyphs">Chinstrap</text>
<rect x="906.6" y="302.00" width="26.6" height="9" fill="#2ca02c" fill-opacity="0.28" stroke="#2ca02c" stroke-width="1.25"/>
<text x="943.6" y="309.70" font-size="12.2" textLength="47.2" lengthAdjust="spacingAndGlyphs">Gentoo</text>
<path d="M510.00,875.20 L511.50,874.80 L513.00,874.47 L514.50,874.19 L516.00,873.95 L517.50,873.75 L519.00,873.58 L520.50,873.44 L522.00,873.33 L523.50,873.24 L525.00,873.17 L526.50,873.13 L528.00,873.09 L529.50,873.07 L531.00,873.06 L532.50,873.05 L534.00,873.04 L535.50,873.04 L537.00,873.03 L538.50,873.01 L540.00,872.98 L541.50,872.94 L543.00,872.88 L544.50,872.81 L546.00,872.70 L547.50,872.58 L549.00,872.42 L550.50,872.23 L552.00,872.01 L553.50,871.75 L555.00,871.44 L556.50,871.09 L558.00,870.70 L559.50,870.25 L561.00,869.75 L562.50,869.18 L564.00,868.56 L565.50,867.88 L567.00,867.13 L568.50,866.30 L570.00,865.41 L571.50,864.44 L573.00,863.39 L574.50,862.25 L576.00,861.03 L577.50,859.72 L579.00,858.32 L580.50,856.82 L582.00,855.23 L583.50,853.54 L585.00,851.75 L586.50,849.87 L588.00,847.89 L589.50,845.82 L591.00,843.65 L592.50,841.39 L594.00,839.04 L595.50,836.59 L597.00,834.05 L598.50,831.42 L600.00,828.70 L601.50,825.88 L603.00,822.98 L604.50,819.99 L606.00,816.90 L607.50,813.73 L609.00,810.47 L610.50,807.13 L612.00,803.69 L613.50,800.17 L615.00,796.57 L616.50,792.91 L618.00,789.19 L619.50,785.43 L621.00,781.63 L622.50,777.80 L624.00,773.96 L625.50,770.10 L627.00,766.19 L628.50,762.23 L630.00,758.20 L631.50,754.06 L633.00,749.81 L634.50,745.44 L636.00,740.95 L637.50,736.37 L639.00,731.69 L640.50,726.94 L642.00,722.13 L643.50,717.28 L645.00,712.38 L646.50,707.46 L648.00,702.54 L649.50,697.61 L651.00,692.70 L652.50,687.83 L654.00,683.02 L655.50,678.30 L657.00,673.69 L658.50,669.23 L660.00,664.93 L661.50,660.83 L663.00,656.94 L664.50,653.30 L666.00,649.94 L667.50,646.87 L669.00,644.12 L670.50,641.72 L672.00,639.70 L673.50,638.08 L675.00,636.85 L676.50,635.97 L678.00,635.42 L679.50,635.17 L681.00,635.19 L682.50,635.43 L684.00,635.88 L685.50,636.50 L687.00,637.26 L688.50,638.12 L690.00,639.07 L691.50,640.05 L693.00,641.06 L694.50,642.05 L696.00,643.04 L697.50,644.02 L699.00,644.99 L700.50,645.95 L702.00,646.89 L703.50,647.83 L705.00,648.74 L706.50,649.64 L708.00,650.52 L709.50,651.39 L711.00,652.23 L712.50,653.05 L714.00,653.85 L715.50,654.63 L717.00,655.38 L718.50,656.11 L720.00,656.81 L721.50,657.49 L723.00,658.13 L724.50,658.76 L726.00,659.39 L727.50,660.06 L729.00,660.79 L730.50,661.61 L732.00,662.55 L733.50,663.64 L735.00,664.90 L736.50,666.36 L738.00,668.05 L739.50,669.99 L741.00,672.22 L742.50,674.77 L744.00,677.64 L745.50,680.84 L747.00,684.35 L748.50,688.16 L750.00,692.24 L751.50,696.59 L753.00,701.19 L754.50,706.02 L756.00,711.08 L757.50,716.34 L759.00,721.78 L760.50,727.41 L762.00,733.19 L763.50,739.12 L765.00,745.16 L766.50,751.28 L768.00,757.46 L769.50,763.64 L771.00,769.81 L772.50,775.87 L774.00,781.73 L775.50,787.28 L777.00,792.41 L778.50,797.03 L780.00,801.16 L781.50,804.87 L783.00,808.25 L784.50,811.38 L786.00,814.35 L787.50,817.21 L789.00,819.99 L790.50,822.67 L792.00,825.25 L793.50,827.72 L795.00,830.09 L796.50,832.34 L798.00,834.47 L799.50,836.47 L801.00,838.34 L802.50,840.08 L804.00,841.68 L805.50,843.17 L807.00,844.54 L808.50,845.80 L810.00,846.96 L811.50,848.03 L813.00,849.02 L814.50,849.92 L816.00,850.76 L817.50,851.53 L819.00,852.24 L820.50,852.91 L822.00,853.53 L823.50,854.12 L825.00,854.68 L826.50,855.22 L828.00,855.75 L829.50,856.27 L831.00,856.80 L832.50,857.33 L834.00,857.88 L835.50,858.45 L837.00,859.04 L838.50,859.64 L840.00,860.25 L841.50,860.87 L843.00,861.49 L844.50,862.12 L846.00,862.74 L847.50,863.36 L849.00,863.96 L850.50,864.56 L852.00,865.15 L853.50,865.71 L855.00,866.26 L856.50,866.78 L858.00,867.27 L859.50,867.73 L861.00,868.16 L862.50,868.56 L864.00,868.92 L865.50,869.24 L867.00,869.54 L868.50,869.80 L870.00,870.03 L871.50,870.23 L873.00,870.41 L874.50,870.56 L876.00,870.69 L877.50,870.80 L879.00,870.88 L880.50,870.94 L882.00,870.99 L883.50,871.02 L885.00,871.03 L886.50,871.03 L888.00,871.01 L889.50,870.99 L891.00,870.95 L892.50,870.91 L894.00,870.85 L895.50,870.80 L897.00,870.73 L898.50,870.67 L900.00,870.60 L901.50,870.53 L903.00,870.46 L904.50,870.40 L906.00,870.33 L907.50,870.27 L909.00,870.22 L910.50,870.17 L912.00,870.13 L913.50,870.10 L915.00,870.08 L916.50,870.07 L918.00,870.07 L919.50,870.08 L921.00,870.11 L922.50,870.16 L924.00,870.22 L925.50,870.30 L927.00,870.40 L928.50,870.52 L930.00,870.66 L931.50,870.83 L933.00,871.01 L934.50,871.22 L936.00,871.45 L937.50,871.69 L939.00,871.94 L940.50,872.21 L942.00,872.48 L943.50,872.75 L945.00,873.03 L946.50,873.31 L948.00,873.59 L949.50,873.86 L951.00,874.13 L952.50,874.39 L954.00,874.63 L955.50,874.86 L957.00,875.07 L958.50,875.20 L960.00,875.20 L961.50,875.20 L963.00,875.20 L964.50,875.20 L966.00,875.20 L967.50,875.20 L969.00,875.20 L970.50,875.20 L972.00,875.20 L973.50,875.20 L975.00,875.20 L976.00,875.20 L976.00,875.20 L510.00,875.20 Z" fill="#2ca02c" fill-opacity="0.28" stroke="none"/><path d="M510.00,875.20 L511.50,874.80 L513.00,874.47 L514.50,874.19 L516.00,873.95 L517.50,873.75 L519.00,873.58 L520.50,873.44 L522.00,873.33 L523.50,873.24 L525.00,873.17 L526.50,873.13 L528.00,873.09 L529.50,873.07 L531.00,873.06 L532.50,873.05 L534.00,873.04 L535.50,873.04 L537.00,873.03 L538.50,873.01 L540.00,872.98 L541.50,872.94 L543.00,872.88 L544.50,872.81 L546.00,872.70 L547.50,872.58 L549.00,872.42 L550.50,872.23 L552.00,872.01 L553.50,871.75 L555.00,871.44 L556.50,871.09 L558.00,870.70 L559.50,870.25 L561.00,869.75 L562.50,869.18 L564.00,868.56 L565.50,867.88 L567.00,867.13 L568.50,866.30 L570.00,865.41 L571.50,864.44 L573.00,863.39 L574.50,862.25 L576.00,861.03 L577.50,859.72 L579.00,858.32 L580.50,856.82 L582.00,855.23 L583.50,853.54 L585.00,851.75 L586.50,849.87 L588.00,847.89 L589.50,845.82 L591.00,843.65 L592.50,841.39 L594.00,839.04 L595.50,836.59 L597.00,834.05 L598.50,831.42 L600.00,828.70 L601.50,825.88 L603.00,822.98 L604.50,819.99 L606.00,816.90 L607.50,813.73 L609.00,810.47 L610.50,807.13 L612.00,803.69 L613.50,800.17 L615.00,796.57 L616.50,792.91 L618.00,789.19 L619.50,785.43 L621.00,781.63 L622.50,777.80 L624.00,773.96 L625.50,770.10 L627.00,766.19 L628.50,762.23 L630.00,758.20 L631.50,754.06 L633.00,749.81 L634.50,745.44 L636.00,740.95 L637.50,736.37 L639.00,731.69 L640.50,726.94 L642.00,722.13 L643.50,717.28 L645.00,712.38 L646.50,707.46 L648.00,702.54 L649.50,697.61 L651.00,692.70 L652.50,687.83 L654.00,683.02 L655.50,678.30 L657.00,673.69 L658.50,669.23 L660.00,664.93 L661.50,660.83 L663.00,656.94 L664.50,653.30 L666.00,649.94 L667.50,646.87 L669.00,644.12 L670.50,641.72 L672.00,639.70 L673.50,638.08 L675.00,636.85 L676.50,635.97 L678.00,635.42 L679.50,635.17 L681.00,635.19 L682.50,635.43 L684.00,635.88 L685.50,636.50 L687.00,637.26 L688.50,638.12 L690.00,639.07 L691.50,640.05 L693.00,641.06 L694.50,642.05 L696.00,643.04 L697.50,644.02 L699.00,644.99 L700.50,645.95 L702.00,646.89 L703.50,647.83 L705.00,648.74 L706.50,649.64 L708.00,650.52 L709.50,651.39 L711.00,652.23 L712.50,653.05 L714.00,653.85 L715.50,654.63 L717.00,655.38 L718.50,656.11 L720.00,656.81 L721.50,657.49 L723.00,658.13 L724.50,658.76 L726.00,659.39 L727.50,660.06 L729.00,660.79 L730.50,661.61 L732.00,662.55 L733.50,663.64 L735.00,664.90 L736.50,666.36 L738.00,668.05 L739.50,669.99 L741.00,672.22 L742.50,674.77 L744.00,677.64 L745.50,680.84 L747.00,684.35 L748.50,688.16 L750.00,692.24 L751.50,696.59 L753.00,701.19 L754.50,706.02 L756.00,711.08 L757.50,716.34 L759.00,721.78 L760.50,727.41 L762.00,733.19 L763.50,739.12 L765.00,745.16 L766.50,751.28 L768.00,757.46 L769.50,763.64 L771.00,769.81 L772.50,775.87 L774.00,781.73 L775.50,787.28 L777.00,792.41 L778.50,797.03 L780.00,801.16 L781.50,804.87 L783.00,808.25 L784.50,811.38 L786.00,814.35 L787.50,817.21 L789.00,819.99 L790.50,822.67 L792.00,825.25 L793.50,827.72 L795.00,830.09 L796.50,832.34 L798.00,834.47 L799.50,836.47 L801.00,838.34 L802.50,840.08 L804.00,841.68 L805.50,843.17 L807.00,844.54 L808.50,845.80 L810.00,846.96 L811.50,848.03 L813.00,849.02 L814.50,849.92 L816.00,850.76 L817.50,851.53 L819.00,852.24 L820.50,852.91 L822.00,853.53 L823.50,854.12 L825.00,854.68 L826.50,855.22 L828.00,855.75 L829.50,856.27 L831.00,856.80 L832.50,857.33 L834.00,857.88 L835.50,858.45 L837.00,859.04 L838.50,859.64 L840.00,860.25 L841.50,860.87 L843.00,861.49 L844.50,862.12 L846.00,862.74 L847.50,863.36 L849.00,863.96 L850.50,864.56 L852.00,865.15 L853.50,865.71 L855.00,866.26 L856.50,866.78 L858.00,867.27 L859.50,867.73 L861.00,868.16 L862.50,868.56 L864.00,868.92 L865.50,869.24 L867.00,869.54 L868.50,869.80 L870.00,870.03 L871.50,870.23 L873.00,870.41 L874.50,870.56 L876.00,870.69 L877.50,870.80 L879.00,870.88 L880.50,870.94 L882.00,870.99 L883.50,871.02 L885.00,871.03 L886.50,871.03 L888.00,871.01 L889.50,870.99 L891.00,870.95 L892.50,870.91 L894.00,870.85 L895.50,870.80 L897.00,870.73 L898.50,870.67 L900.00,870.60 L901.50,870.53 L903.00,870.46 L904.50,870.40 L906.00,870.33 L907.50,870.27 L909.00,870.22 L910.50,870.17 L912.00,870.13 L913.50,870.10 L915.00,870.08 L916.50,870.07 L918.00,870.07 L919.50,870.08 L921.00,870.11 L922.50,870.16 L924.00,870.22 L925.50,870.30 L927.00,870.40 L928.50,870.52 L930.00,870.66 L931.50,870.83 L933.00,871.01 L934.50,871.22 L936.00,871.45 L937.50,871.69 L939.00,871.94 L940.50,872.21 L942.00,872.48 L943.50,872.75 L945.00,873.03 L946.50,873.31 L948.00,873.59 L949.50,873.86 L951.00,874.13 L952.50,874.39 L954.00,874.63 L955.50,874.86 L957.00,875.07 L958.50,875.20 L960.00,875.20 L961.50,875.20 L963.00,875.20 L964.50,875.20 L966.00,875.20 L967.50,875.20 L969.00,875.20 L970.50,875.20 L972.00,875.20 L973.50,875.20 L975.00,875.20 L976.00,875.20" fill="none" stroke="#2ca02c" stroke-width="1.45" stroke-linejoin="round"/>
<path d="M520.00,875.20 L521.50,875.20 L523.00,875.19 L524.50,875.06 L526.00,874.92 L527.50,874.76 L529.00,874.60 L530.50,874.43 L532.00,874.24 L533.50,874.05 L535.00,873.84 L536.50,873.62 L538.00,873.40 L539.50,873.16 L541.00,872.91 L542.50,872.65 L544.00,872.38 L545.50,872.10 L547.00,871.81 L548.50,871.50 L550.00,871.19 L551.50,870.86 L553.00,870.53 L554.50,870.18 L556.00,869.82 L557.50,869.45 L559.00,869.07 L560.50,868.68 L562.00,868.27 L563.50,867.86 L565.00,867.43 L566.50,866.99 L568.00,866.54 L569.50,866.08 L571.00,865.61 L572.50,865.12 L574.00,864.63 L575.50,864.12 L577.00,863.60 L578.50,863.07 L580.00,862.52 L581.50,861.97 L583.00,861.40 L584.50,860.82 L586.00,860.23 L587.50,859.62 L589.00,859.01 L590.50,858.38 L592.00,857.74 L593.50,857.09 L595.00,856.42 L596.50,855.75 L598.00,855.06 L599.50,854.35 L601.00,853.64 L602.50,852.91 L604.00,852.17 L605.50,851.42 L607.00,850.66 L608.50,849.88 L610.00,849.09 L611.50,848.29 L613.00,847.47 L614.50,846.64 L616.00,845.80 L617.50,844.95 L619.00,844.08 L620.50,843.19 L622.00,842.28 L623.50,841.34 L625.00,840.36 L626.50,839.33 L628.00,838.26 L629.50,837.13 L631.00,835.94 L632.50,834.68 L634.00,833.34 L635.50,831.93 L637.00,830.42 L638.50,828.83 L640.00,827.13 L641.50,825.33 L643.00,823.42 L644.50,821.41 L646.00,819.32 L647.50,817.17 L649.00,814.99 L650.50,812.79 L652.00,810.59 L653.50,808.42 L655.00,806.30 L656.50,804.25 L658.00,802.26 L659.50,800.35 L661.00,798.52 L662.50,796.77 L664.00,795.09 L665.50,793.50 L667.00,791.98 L668.50,790.56 L670.00,789.21 L671.50,787.96 L673.00,786.79 L674.50,785.72 L676.00,784.74 L677.50,783.85 L679.00,783.06 L680.50,782.37 L682.00,781.77 L683.50,781.28 L685.00,780.89 L686.50,780.60 L688.00,780.42 L689.50,780.34 L691.00,780.34 L692.50,780.41 L694.00,780.54 L695.50,780.72 L697.00,780.92 L698.50,781.14 L700.00,781.36 L701.50,781.57 L703.00,781.76 L704.50,781.91 L706.00,782.00 L707.50,782.03 L709.00,781.98 L710.50,781.84 L712.00,781.59 L713.50,781.21 L715.00,780.71 L716.50,780.05 L718.00,779.24 L719.50,778.24 L721.00,777.06 L722.50,775.70 L724.00,774.19 L725.50,772.55 L727.00,770.79 L728.50,768.96 L730.00,767.06 L731.50,765.13 L733.00,763.18 L734.50,761.25 L736.00,759.35 L737.50,757.50 L739.00,755.71 L740.50,754.00 L742.00,752.38 L743.50,750.87 L745.00,749.47 L746.50,748.20 L748.00,747.08 L749.50,746.11 L751.00,745.32 L752.50,744.70 L754.00,744.29 L755.50,744.08 L757.00,744.09 L758.50,744.34 L760.00,744.81 L761.50,745.50 L763.00,746.40 L764.50,747.50 L766.00,748.81 L767.50,750.32 L769.00,752.01 L770.50,753.89 L772.00,755.95 L773.50,758.18 L775.00,760.58 L776.50,763.14 L778.00,765.85 L779.50,768.72 L781.00,771.72 L782.50,774.84 L784.00,778.06 L785.50,781.35 L787.00,784.70 L788.50,788.08 L790.00,791.47 L791.50,794.85 L793.00,798.20 L794.50,801.50 L796.00,804.73 L797.50,807.90 L799.00,810.98 L800.50,813.98 L802.00,816.90 L803.50,819.74 L805.00,822.47 L806.50,825.11 L808.00,827.65 L809.50,830.08 L811.00,832.41 L812.50,834.62 L814.00,836.72 L815.50,838.72 L817.00,840.63 L818.50,842.44 L820.00,844.16 L821.50,845.79 L823.00,847.34 L824.50,848.82 L826.00,850.22 L827.50,851.56 L829.00,852.82 L830.50,854.02 L832.00,855.16 L833.50,856.23 L835.00,857.25 L836.50,858.20 L838.00,859.10 L839.50,859.95 L841.00,860.74 L842.50,861.49 L844.00,862.18 L845.50,862.83 L847.00,863.43 L848.50,863.99 L850.00,864.51 L851.50,864.98 L853.00,865.43 L854.50,865.83 L856.00,866.21 L857.50,866.55 L859.00,866.86 L860.50,867.14 L862.00,867.40 L863.50,867.64 L865.00,867.85 L866.50,868.04 L868.00,868.22 L869.50,868.38 L871.00,868.52 L872.50,868.65 L874.00,868.77 L875.50,868.88 L877.00,868.99 L878.50,869.09 L880.00,869.19 L881.50,869.29 L883.00,869.38 L884.50,869.49 L886.00,869.59 L887.50,869.70 L889.00,869.82 L890.50,869.95 L892.00,870.08 L893.50,870.21 L895.00,870.35 L896.50,870.49 L898.00,870.64 L899.50,870.79 L901.00,870.94 L902.50,871.10 L904.00,871.26 L905.50,871.42 L907.00,871.58 L908.50,871.74 L910.00,871.91 L911.50,872.07 L913.00,872.23 L914.50,872.40 L916.00,872.56 L917.50,872.72 L919.00,872.88 L920.50,873.04 L922.00,873.19 L923.50,873.34 L925.00,873.49 L926.50,873.63 L928.00,873.77 L929.50,873.91 L931.00,874.04 L932.50,874.16 L934.00,874.28 L935.50,874.40 L937.00,874.50 L938.50,874.60 L940.00,874.69 L941.50,874.78 L943.00,874.85 L944.50,874.92 L946.00,874.98 L947.50,875.03 L949.00,875.07 L950.50,875.10 L952.00,875.12 L953.50,875.12 L955.00,875.12 L956.50,875.10 L958.00,875.08 L959.50,875.04 L961.00,875.20 L961.00,875.20 L520.00,875.20 Z" fill="#ff7f0e" fill-opacity="0.28" stroke="none"/><path d="M520.00,875.20 L521.50,875.20 L523.00,875.19 L524.50,875.06 L526.00,874.92 L527.50,874.76 L529.00,874.60 L530.50,874.43 L532.00,874.24 L533.50,874.05 L535.00,873.84 L536.50,873.62 L538.00,873.40 L539.50,873.16 L541.00,872.91 L542.50,872.65 L544.00,872.38 L545.50,872.10 L547.00,871.81 L548.50,871.50 L550.00,871.19 L551.50,870.86 L553.00,870.53 L554.50,870.18 L556.00,869.82 L557.50,869.45 L559.00,869.07 L560.50,868.68 L562.00,868.27 L563.50,867.86 L565.00,867.43 L566.50,866.99 L568.00,866.54 L569.50,866.08 L571.00,865.61 L572.50,865.12 L574.00,864.63 L575.50,864.12 L577.00,863.60 L578.50,863.07 L580.00,862.52 L581.50,861.97 L583.00,861.40 L584.50,860.82 L586.00,860.23 L587.50,859.62 L589.00,859.01 L590.50,858.38 L592.00,857.74 L593.50,857.09 L595.00,856.42 L596.50,855.75 L598.00,855.06 L599.50,854.35 L601.00,853.64 L602.50,852.91 L604.00,852.17 L605.50,851.42 L607.00,850.66 L608.50,849.88 L610.00,849.09 L611.50,848.29 L613.00,847.47 L614.50,846.64 L616.00,845.80 L617.50,844.95 L619.00,844.08 L620.50,843.19 L622.00,842.28 L623.50,841.34 L625.00,840.36 L626.50,839.33 L628.00,838.26 L629.50,837.13 L631.00,835.94 L632.50,834.68 L634.00,833.34 L635.50,831.93 L637.00,830.42 L638.50,828.83 L640.00,827.13 L641.50,825.33 L643.00,823.42 L644.50,821.41 L646.00,819.32 L647.50,817.17 L649.00,814.99 L650.50,812.79 L652.00,810.59 L653.50,808.42 L655.00,806.30 L656.50,804.25 L658.00,802.26 L659.50,800.35 L661.00,798.52 L662.50,796.77 L664.00,795.09 L665.50,793.50 L667.00,791.98 L668.50,790.56 L670.00,789.21 L671.50,787.96 L673.00,786.79 L674.50,785.72 L676.00,784.74 L677.50,783.85 L679.00,783.06 L680.50,782.37 L682.00,781.77 L683.50,781.28 L685.00,780.89 L686.50,780.60 L688.00,780.42 L689.50,780.34 L691.00,780.34 L692.50,780.41 L694.00,780.54 L695.50,780.72 L697.00,780.92 L698.50,781.14 L700.00,781.36 L701.50,781.57 L703.00,781.76 L704.50,781.91 L706.00,782.00 L707.50,782.03 L709.00,781.98 L710.50,781.84 L712.00,781.59 L713.50,781.21 L715.00,780.71 L716.50,780.05 L718.00,779.24 L719.50,778.24 L721.00,777.06 L722.50,775.70 L724.00,774.19 L725.50,772.55 L727.00,770.79 L728.50,768.96 L730.00,767.06 L731.50,765.13 L733.00,763.18 L734.50,761.25 L736.00,759.35 L737.50,757.50 L739.00,755.71 L740.50,754.00 L742.00,752.38 L743.50,750.87 L745.00,749.47 L746.50,748.20 L748.00,747.08 L749.50,746.11 L751.00,745.32 L752.50,744.70 L754.00,744.29 L755.50,744.08 L757.00,744.09 L758.50,744.34 L760.00,744.81 L761.50,745.50 L763.00,746.40 L764.50,747.50 L766.00,748.81 L767.50,750.32 L769.00,752.01 L770.50,753.89 L772.00,755.95 L773.50,758.18 L775.00,760.58 L776.50,763.14 L778.00,765.85 L779.50,768.72 L781.00,771.72 L782.50,774.84 L784.00,778.06 L785.50,781.35 L787.00,784.70 L788.50,788.08 L790.00,791.47 L791.50,794.85 L793.00,798.20 L794.50,801.50 L796.00,804.73 L797.50,807.90 L799.00,810.98 L800.50,813.98 L802.00,816.90 L803.50,819.74 L805.00,822.47 L806.50,825.11 L808.00,827.65 L809.50,830.08 L811.00,832.41 L812.50,834.62 L814.00,836.72 L815.50,838.72 L817.00,840.63 L818.50,842.44 L820.00,844.16 L821.50,845.79 L823.00,847.34 L824.50,848.82 L826.00,850.22 L827.50,851.56 L829.00,852.82 L830.50,854.02 L832.00,855.16 L833.50,856.23 L835.00,857.25 L836.50,858.20 L838.00,859.10 L839.50,859.95 L841.00,860.74 L842.50,861.49 L844.00,862.18 L845.50,862.83 L847.00,863.43 L848.50,863.99 L850.00,864.51 L851.50,864.98 L853.00,865.43 L854.50,865.83 L856.00,866.21 L857.50,866.55 L859.00,866.86 L860.50,867.14 L862.00,867.40 L863.50,867.64 L865.00,867.85 L866.50,868.04 L868.00,868.22 L869.50,868.38 L871.00,868.52 L872.50,868.65 L874.00,868.77 L875.50,868.88 L877.00,868.99 L878.50,869.09 L880.00,869.19 L881.50,869.29 L883.00,869.38 L884.50,869.49 L886.00,869.59 L887.50,869.70 L889.00,869.82 L890.50,869.95 L892.00,870.08 L893.50,870.21 L895.00,870.35 L896.50,870.49 L898.00,870.64 L899.50,870.79 L901.00,870.94 L902.50,871.10 L904.00,871.26 L905.50,871.42 L907.00,871.58 L908.50,871.74 L910.00,871.91 L911.50,872.07 L913.00,872.23 L914.50,872.40 L916.00,872.56 L917.50,872.72 L919.00,872.88 L920.50,873.04 L922.00,873.19 L923.50,873.34 L925.00,873.49 L926.50,873.63 L928.00,873.77 L929.50,873.91 L931.00,874.04 L932.50,874.16 L934.00,874.28 L935.50,874.40 L937.00,874.50 L938.50,874.60 L940.00,874.69 L941.50,874.78 L943.00,874.85 L944.50,874.92 L946.00,874.98 L947.50,875.03 L949.00,875.07 L950.50,875.10 L952.00,875.12 L953.50,875.12 L955.00,875.12 L956.50,875.10 L958.00,875.08 L959.50,875.04 L961.00,875.20" fill="none" stroke="#ff7f0e" stroke-width="1.45" stroke-linejoin="round"/>
<path d="M380.00,875.20 L381.50,875.00 L383.00,874.81 L384.50,874.63 L386.00,874.45 L387.50,874.27 L389.00,874.09 L390.50,873.91 L392.00,873.72 L393.50,873.53 L395.00,873.32 L396.50,873.09 L398.00,872.85 L399.50,872.59 L401.00,872.31 L402.50,872.00 L404.00,871.66 L405.50,871.29 L407.00,870.89 L408.50,870.46 L410.00,869.98 L411.50,869.46 L413.00,868.90 L414.50,868.30 L416.00,867.64 L417.50,866.93 L419.00,866.16 L420.50,865.34 L422.00,864.46 L423.50,863.51 L425.00,862.50 L426.50,861.42 L428.00,860.27 L429.50,859.05 L431.00,857.75 L432.50,856.37 L434.00,854.91 L435.50,853.37 L437.00,851.74 L438.50,850.02 L440.00,848.21 L441.50,846.30 L443.00,844.30 L444.50,842.19 L446.00,839.95 L447.50,837.56 L449.00,835.01 L450.50,832.26 L452.00,829.29 L453.50,826.09 L455.00,822.63 L456.50,818.89 L458.00,814.87 L459.50,810.54 L461.00,805.91 L462.50,800.96 L464.00,795.68 L465.50,790.07 L467.00,784.13 L468.50,777.91 L470.00,771.46 L471.50,764.82 L473.00,758.04 L474.50,751.16 L476.00,744.23 L477.50,737.29 L479.00,730.33 L480.50,723.39 L482.00,716.48 L483.50,709.62 L485.00,702.82 L486.50,696.10 L488.00,689.47 L489.50,682.96 L491.00,676.58 L492.50,670.35 L494.00,664.28 L495.50,658.38 L497.00,652.64 L498.50,647.07 L500.00,641.67 L501.50,636.43 L503.00,631.37 L504.50,626.47 L506.00,621.74 L507.50,617.18 L509.00,612.79 L510.50,608.57 L512.00,604.53 L513.50,600.66 L515.00,596.96 L516.50,593.43 L518.00,590.08 L519.50,586.90 L521.00,583.89 L522.50,581.07 L524.00,578.42 L525.50,575.94 L527.00,573.64 L528.50,571.52 L530.00,569.58 L531.50,567.82 L533.00,566.24 L534.50,564.84 L536.00,563.61 L537.50,562.57 L539.00,561.71 L540.50,561.04 L542.00,560.54 L543.50,560.23 L545.00,560.11 L546.50,560.15 L548.00,560.34 L549.50,560.67 L551.00,561.12 L552.50,561.66 L554.00,562.28 L555.50,562.97 L557.00,563.71 L558.50,564.48 L560.00,565.25 L561.50,566.03 L563.00,566.83 L564.50,567.67 L566.00,568.59 L567.50,569.60 L569.00,570.74 L570.50,572.03 L572.00,573.50 L573.50,575.16 L575.00,577.06 L576.50,579.21 L578.00,581.62 L579.50,584.30 L581.00,587.25 L582.50,590.47 L584.00,593.98 L585.50,597.77 L587.00,601.85 L588.50,606.23 L590.00,610.91 L591.50,615.90 L593.00,621.20 L594.50,626.82 L596.00,632.77 L597.50,639.04 L599.00,645.65 L600.50,652.63 L602.00,660.01 L603.50,667.84 L605.00,676.15 L606.50,684.87 L608.00,693.56 L609.50,701.67 L611.00,708.99 L612.50,715.84 L614.00,722.54 L615.50,729.47 L617.00,736.88 L618.50,744.67 L620.00,752.57 L621.50,760.28 L623.00,767.56 L624.50,774.13 L626.00,779.99 L627.50,785.32 L629.00,790.30 L630.50,795.11 L632.00,799.91 L633.50,804.71 L635.00,809.42 L636.50,813.97 L638.00,818.28 L639.50,822.27 L641.00,825.88 L642.50,829.08 L644.00,831.91 L645.50,834.38 L647.00,836.53 L648.50,838.40 L650.00,840.01 L651.50,841.40 L653.00,842.59 L654.50,843.62 L656.00,844.51 L657.50,845.30 L659.00,846.02 L660.50,846.70 L662.00,847.36 L663.50,848.05 L665.00,848.77 L666.50,849.51 L668.00,850.29 L669.50,851.09 L671.00,851.91 L672.50,852.75 L674.00,853.61 L675.50,854.49 L677.00,855.37 L678.50,856.27 L680.00,857.17 L681.50,858.07 L683.00,858.98 L684.50,859.88 L686.00,860.78 L687.50,861.68 L689.00,862.56 L690.50,863.44 L692.00,864.29 L693.50,865.14 L695.00,865.96 L696.50,866.76 L698.00,867.53 L699.50,868.28 L701.00,868.99 L702.50,869.68 L704.00,870.32 L705.50,870.93 L707.00,871.50 L708.50,872.03 L710.00,872.52 L711.50,872.97 L713.00,873.38 L714.50,873.74 L716.00,874.07 L717.50,874.35 L719.00,874.59 L720.50,874.80 L722.00,874.95 L723.50,875.07 L725.00,875.14 L726.50,875.18 L727.50,875.20 L727.50,875.20 L380.00,875.20 Z" fill="#1f77b4" fill-opacity="0.28" stroke="none"/><path d="M380.00,875.20 L381.50,875.00 L383.00,874.81 L384.50,874.63 L386.00,874.45 L387.50,874.27 L389.00,874.09 L390.50,873.91 L392.00,873.72 L393.50,873.53 L395.00,873.32 L396.50,873.09 L398.00,872.85 L399.50,872.59 L401.00,872.31 L402.50,872.00 L404.00,871.66 L405.50,871.29 L407.00,870.89 L408.50,870.46 L410.00,869.98 L411.50,869.46 L413.00,868.90 L414.50,868.30 L416.00,867.64 L417.50,866.93 L419.00,866.16 L420.50,865.34 L422.00,864.46 L423.50,863.51 L425.00,862.50 L426.50,861.42 L428.00,860.27 L429.50,859.05 L431.00,857.75 L432.50,856.37 L434.00,854.91 L435.50,853.37 L437.00,851.74 L438.50,850.02 L440.00,848.21 L441.50,846.30 L443.00,844.30 L444.50,842.19 L446.00,839.95 L447.50,837.56 L449.00,835.01 L450.50,832.26 L452.00,829.29 L453.50,826.09 L455.00,822.63 L456.50,818.89 L458.00,814.87 L459.50,810.54 L461.00,805.91 L462.50,800.96 L464.00,795.68 L465.50,790.07 L467.00,784.13 L468.50,777.91 L470.00,771.46 L471.50,764.82 L473.00,758.04 L474.50,751.16 L476.00,744.23 L477.50,737.29 L479.00,730.33 L480.50,723.39 L482.00,716.48 L483.50,709.62 L485.00,702.82 L486.50,696.10 L488.00,689.47 L489.50,682.96 L491.00,676.58 L492.50,670.35 L494.00,664.28 L495.50,658.38 L497.00,652.64 L498.50,647.07 L500.00,641.67 L501.50,636.43 L503.00,631.37 L504.50,626.47 L506.00,621.74 L507.50,617.18 L509.00,612.79 L510.50,608.57 L512.00,604.53 L513.50,600.66 L515.00,596.96 L516.50,593.43 L518.00,590.08 L519.50,586.90 L521.00,583.89 L522.50,581.07 L524.00,578.42 L525.50,575.94 L527.00,573.64 L528.50,571.52 L530.00,569.58 L531.50,567.82 L533.00,566.24 L534.50,564.84 L536.00,563.61 L537.50,562.57 L539.00,561.71 L540.50,561.04 L542.00,560.54 L543.50,560.23 L545.00,560.11 L546.50,560.15 L548.00,560.34 L549.50,560.67 L551.00,561.12 L552.50,561.66 L554.00,562.28 L555.50,562.97 L557.00,563.71 L558.50,564.48 L560.00,565.25 L561.50,566.03 L563.00,566.83 L564.50,567.67 L566.00,568.59 L567.50,569.60 L569.00,570.74 L570.50,572.03 L572.00,573.50 L573.50,575.16 L575.00,577.06 L576.50,579.21 L578.00,581.62 L579.50,584.30 L581.00,587.25 L582.50,590.47 L584.00,593.98 L585.50,597.77 L587.00,601.85 L588.50,606.23 L590.00,610.91 L591.50,615.90 L593.00,621.20 L594.50,626.82 L596.00,632.77 L597.50,639.04 L599.00,645.65 L600.50,652.63 L602.00,660.01 L603.50,667.84 L605.00,676.15 L606.50,684.87 L608.00,693.56 L609.50,701.67 L611.00,708.99 L612.50,715.84 L614.00,722.54 L615.50,729.47 L617.00,736.88 L618.50,744.67 L620.00,752.57 L621.50,760.28 L623.00,767.56 L624.50,774.13 L626.00,779.99 L627.50,785.32 L629.00,790.30 L630.50,795.11 L632.00,799.91 L633.50,804.71 L635.00,809.42 L636.50,813.97 L638.00,818.28 L639.50,822.27 L641.00,825.88 L642.50,829.08 L644.00,831.91 L645.50,834.38 L647.00,836.53 L648.50,838.40 L650.00,840.01 L651.50,841.40 L653.00,842.59 L654.50,843.62 L656.00,844.51 L657.50,845.30 L659.00,846.02 L660.50,846.70 L662.00,847.36 L663.50,848.05 L665.00,848.77 L666.50,849.51 L668.00,850.29 L669.50,851.09 L671.00,851.91 L672.50,852.75 L674.00,853.61 L675.50,854.49 L677.00,855.37 L678.50,856.27 L680.00,857.17 L681.50,858.07 L683.00,858.98 L684.50,859.88 L686.00,860.78 L687.50,861.68 L689.00,862.56 L690.50,863.44 L692.00,864.29 L693.50,865.14 L695.00,865.96 L696.50,866.76 L698.00,867.53 L699.50,868.28 L701.00,868.99 L702.50,869.68 L704.00,870.32 L705.50,870.93 L707.00,871.50 L708.50,872.03 L710.00,872.52 L711.50,872.97 L713.00,873.38 L714.50,873.74 L716.00,874.07 L717.50,874.35 L719.00,874.59 L720.50,874.80 L722.00,874.95 L723.50,875.07 L725.00,875.14 L726.50,875.18 L727.50,875.20" fill="none" stroke="#1f77b4" stroke-width="1.45" stroke-linejoin="round"/>
<line x1="350.5" y1="544.7" x2="350.5" y2="875.5" stroke="#000" stroke-width="1.05"/>
<line x1="350" y1="875.5" x2="1007" y2="875.5" stroke="#000" stroke-width="1.05"/>
<line x1="345" y1="875.5" x2="350.5" y2="875.5" stroke="#000" stroke-width="1.05"/>
<text x="339.8" y="879.60" text-anchor="end" font-size="12.2" textLength="27" lengthAdjust="spacingAndGlyphs">0.00</text>
<line x1="345" y1="819.5" x2="350.5" y2="819.5" stroke="#000" stroke-width="1.05"/>
<text x="339.8" y="824.34" text-anchor="end" font-size="12.2" textLength="27" lengthAdjust="spacingAndGlyphs">0.01</text>
<line x1="345" y1="764.5" x2="350.5" y2="764.5" stroke="#000" stroke-width="1.05"/>
<text x="339.8" y="769.08" text-anchor="end" font-size="12.2" textLength="27" lengthAdjust="spacingAndGlyphs">0.02</text>
<line x1="345" y1="709.5" x2="350.5" y2="709.5" stroke="#000" stroke-width="1.05"/>
<text x="339.8" y="713.82" text-anchor="end" font-size="12.2" textLength="27" lengthAdjust="spacingAndGlyphs">0.03</text>
<line x1="345" y1="654.5" x2="350.5" y2="654.5" stroke="#000" stroke-width="1.05"/>
<text x="339.8" y="658.56" text-anchor="end" font-size="12.2" textLength="27" lengthAdjust="spacingAndGlyphs">0.04</text>
<line x1="345" y1="598.5" x2="350.5" y2="598.5" stroke="#000" stroke-width="1.05"/>
<text x="339.8" y="603.30" text-anchor="end" font-size="12.2" textLength="27" lengthAdjust="spacingAndGlyphs">0.05</text>
<line x1="394.5" y1="875.5" x2="394.5" y2="880.5" stroke="#000" stroke-width="1.05"/>
<text x="394.40" y="893.80" text-anchor="middle" font-size="12.2" textLength="14.5" lengthAdjust="spacingAndGlyphs">30</text>
<line x1="482.5" y1="875.5" x2="482.5" y2="880.5" stroke="#000" stroke-width="1.05"/>
<text x="482.16" y="893.80" text-anchor="middle" font-size="12.2" textLength="14.5" lengthAdjust="spacingAndGlyphs">35</text>
<line x1="569.5" y1="875.5" x2="569.5" y2="880.5" stroke="#000" stroke-width="1.05"/>
<text x="569.93" y="893.80" text-anchor="middle" font-size="12.2" textLength="14.5" lengthAdjust="spacingAndGlyphs">40</text>
<line x1="657.5" y1="875.5" x2="657.5" y2="880.5" stroke="#000" stroke-width="1.05"/>
<text x="657.69" y="893.80" text-anchor="middle" font-size="12.2" textLength="14.5" lengthAdjust="spacingAndGlyphs">45</text>
<line x1="745.5" y1="875.5" x2="745.5" y2="880.5" stroke="#000" stroke-width="1.05"/>
<text x="745.46" y="893.80" text-anchor="middle" font-size="12.2" textLength="14.5" lengthAdjust="spacingAndGlyphs">50</text>
<line x1="833.5" y1="875.5" x2="833.5" y2="880.5" stroke="#000" stroke-width="1.05"/>
<text x="833.23" y="893.80" text-anchor="middle" font-size="12.2" textLength="14.5" lengthAdjust="spacingAndGlyphs">55</text>
<line x1="920.5" y1="875.5" x2="920.5" y2="880.5" stroke="#000" stroke-width="1.05"/>
<text x="920.99" y="893.80" text-anchor="middle" font-size="12.2" textLength="14.5" lengthAdjust="spacingAndGlyphs">60</text>
<text transform="translate(302.9,712.3) rotate(-90)" text-anchor="middle" font-size="12.2" textLength="48.6" lengthAdjust="spacingAndGlyphs">Density</text>
<text x="678" y="912.80" text-anchor="middle" font-size="12.2" textLength="101.5" lengthAdjust="spacingAndGlyphs">bill_length_mm</text>
<text x="957.6" y="704.80" text-anchor="middle" font-size="12.2" textLength="48" lengthAdjust="spacingAndGlyphs">species</text>
<rect x="906.6" y="715.50" width="26.6" height="9" fill="#1f77b4" fill-opacity="0.28" stroke="#1f77b4" stroke-width="1.25"/>
<text x="943.6" y="723.90" font-size="12.2" textLength="39.6" lengthAdjust="spacingAndGlyphs">Adelie</text>
<rect x="906.6" y="735.30" width="26.6" height="9" fill="#ff7f0e" fill-opacity="0.28" stroke="#ff7f0e" stroke-width="1.25"/>
<text x="943.6" y="743.30" font-size="12.2" textLength="62.8" lengthAdjust="spacingAndGlyphs">Chinstrap</text>
<rect x="906.6" y="754.80" width="26.6" height="9" fill="#2ca02c" fill-opacity="0.28" stroke="#2ca02c" stroke-width="1.25"/>
<text x="943.6" y="762.50" font-size="12.2" textLength="47.2" lengthAdjust="spacingAndGlyphs">Gentoo</text>
</svg>
</body></html>
